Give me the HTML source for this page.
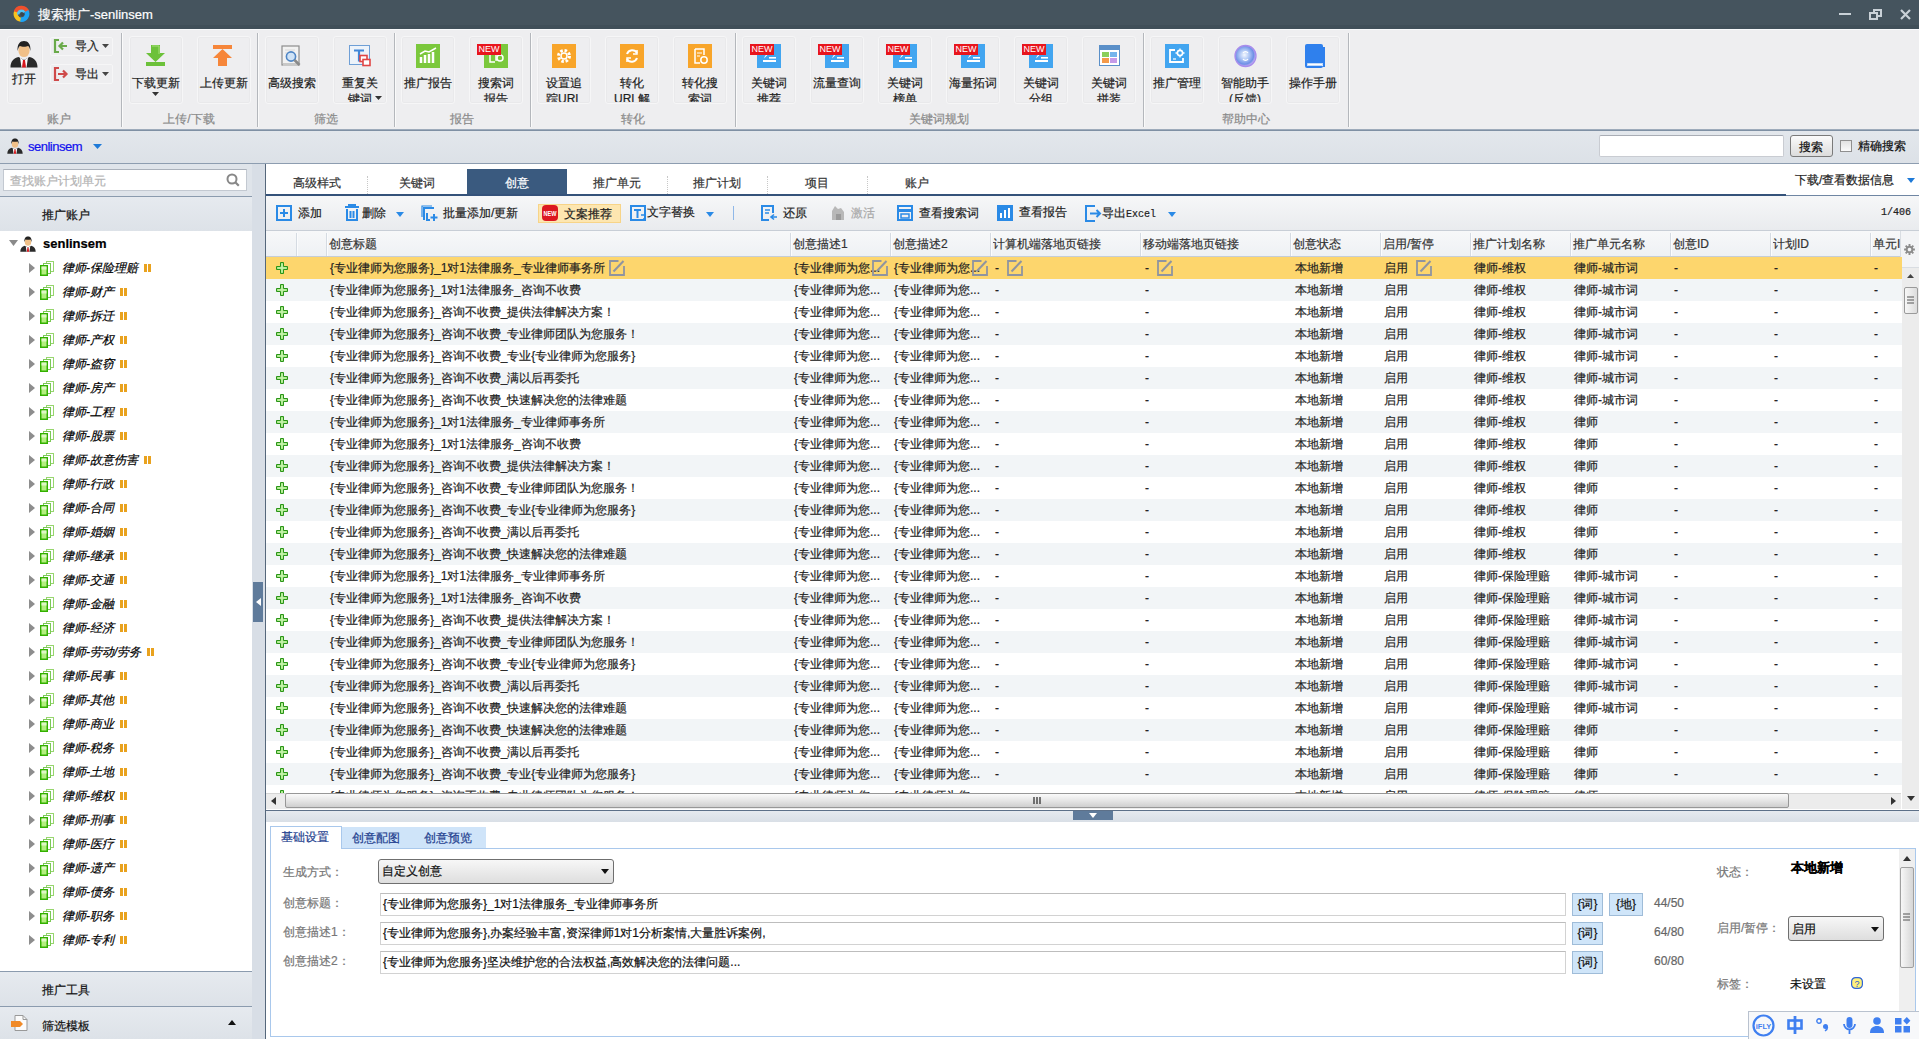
<!DOCTYPE html><html><head><meta charset="utf-8"><style>
*{box-sizing:border-box}
html,body{margin:0;padding:0}
body{width:1919px;height:1039px;overflow:hidden;position:relative;font-family:"Liberation Sans",sans-serif;font-size:12px;color:#1e1e1e;background:#dfe4ea}
div{position:absolute}
.t{white-space:nowrap;line-height:16px;height:16px;-webkit-text-stroke-width:0.2px}
svg{position:absolute;overflow:visible}
</style></head><body>
<div style="left:0px;top:0px;width:1919px;height:29px;background:#45545e"></div>
<div style="left:0px;top:25px;width:1919px;height:4px;background:#404f59"></div>
<div style="left:0px;top:29px;width:1919px;height:1px;background:#f7f9fb"></div>
<svg style="left:12px;top:5px" width="20" height="20" viewBox="0 0 20 20"><path d="M8.99 14.78A5.8 5.8 0 0 1 4.75 5.67" fill="none" stroke="#f7c21f" stroke-width="4.2"/><path d="M3.67 6.88A6.2 6.2 0 0 1 15.49 7.40" fill="none" stroke="#f0502c" stroke-width="4"/><path d="M14.35 6.20A5.6 5.6 0 0 1 8.53 14.51" fill="none" stroke="#1ea4f5" stroke-width="4.6"/><path d="M6.35 9.56A3.2 3.2 0 0 1 12.27 7.40" fill="none" stroke="#55c4f2" stroke-width="2.6"/><circle cx="10.3" cy="9.3" r="1.9" fill="#3a4650"/></svg>
<div class="t" style="left:38px;top:7px;color:#fff;font-size:13px"><span style="font-size:12.5px">搜索推广</span>-senlinsem</div>
<div style="left:1839px;top:13px;width:12px;height:2px;background:#c9d1d7"></div>
<svg style="left:1869px;top:9px" width="13" height="11"><path d="M5 3V1h7v6h-3" fill="none" stroke="#c9d1d7" stroke-width="2"/><rect x="1" y="4" width="7" height="6" fill="none" stroke="#c9d1d7" stroke-width="2"/></svg>
<svg style="left:1900px;top:9px" width="11" height="11"><path d="M1 1L10 10M10 1L1 10" stroke="#c9d1d7" stroke-width="2.2"/></svg><div style="left:0px;top:30px;width:1919px;height:99px;background:#eeeef0"></div>
<div style="left:0px;top:129px;width:1919px;height:1px;background:#9eabbb"></div>
<div style="left:0px;top:130px;width:1919px;height:1px;background:#7f90a4"></div>
<div style="left:121px;top:33px;width:1px;height:94px;background:#b4b7bc"></div>
<div style="left:122px;top:33px;width:1px;height:94px;background:#fafafa"></div>
<div style="left:257px;top:33px;width:1px;height:94px;background:#b4b7bc"></div>
<div style="left:258px;top:33px;width:1px;height:94px;background:#fafafa"></div>
<div style="left:394px;top:33px;width:1px;height:94px;background:#b4b7bc"></div>
<div style="left:395px;top:33px;width:1px;height:94px;background:#fafafa"></div>
<div style="left:530px;top:33px;width:1px;height:94px;background:#b4b7bc"></div>
<div style="left:531px;top:33px;width:1px;height:94px;background:#fafafa"></div>
<div style="left:735px;top:33px;width:1px;height:94px;background:#b4b7bc"></div>
<div style="left:736px;top:33px;width:1px;height:94px;background:#fafafa"></div>
<div style="left:1143px;top:33px;width:1px;height:94px;background:#b4b7bc"></div>
<div style="left:1144px;top:33px;width:1px;height:94px;background:#fafafa"></div>
<div style="left:1348px;top:33px;width:1px;height:94px;background:#b4b7bc"></div>
<div style="left:1349px;top:33px;width:1px;height:94px;background:#fafafa"></div>
<div class="t" style="left:0px;top:111px;width:118px;text-align:center;color:#8a8a8a">账户</div>
<div class="t" style="left:121px;top:111px;width:136px;text-align:center;color:#8a8a8a">上传/下载</div>
<div class="t" style="left:257px;top:111px;width:137px;text-align:center;color:#8a8a8a">筛选</div>
<div class="t" style="left:394px;top:111px;width:136px;text-align:center;color:#8a8a8a">报告</div>
<div class="t" style="left:530px;top:111px;width:205px;text-align:center;color:#8a8a8a">转化</div>
<div class="t" style="left:735px;top:111px;width:408px;text-align:center;color:#8a8a8a">关键词规划</div>
<div class="t" style="left:1143px;top:111px;width:205px;text-align:center;color:#8a8a8a">帮助中心</div>
<div style="left:7px;top:36px;width:36px;height:68px;border:1px solid #f6f6f7;border-radius:3px;box-shadow:inset 0 0 0 1px #e9e9eb"></div>
<svg style="left:10px;top:40px" width="28" height="28" viewBox="0 0 28 28">
<path d="M0.5 27.5c0-6 3-9.5 8-10.5l5.5 3 5.5-3c5 1 8 4.5 8 10.5z" fill="#2a2a2a"/>
<path d="M10 17.5l4 3 4-3-1.5 10h-5z" fill="#fff"/>
<path d="M13 20h2l1 7.5h-4z" fill="#d8161c"/>
<ellipse cx="14" cy="10.5" rx="5.6" ry="6.6" fill="#f0c088"/>
<path d="M7.6 11C7 4 10 1 14 1s7 3 6.4 10c-.6-3-1.5-4.5-2.4-5-1.5 1-6.5 1-8 0-.9.5-1.8 2-2.4 5z" fill="#222"/>
</svg>
<div class="t" style="left:12px;top:71px;">打开</div>
<div style="left:50px;top:37px;width:63px;height:19px;border:1px solid #f6f6f7;border-radius:2px"></div>
<div style="left:50px;top:64px;width:63px;height:20px;border:1px solid #f6f6f7;border-radius:2px"></div>
<svg style="left:54px;top:39px" width="14" height="14"><path d="M5 1H1v12h4" fill="none" stroke="#6aaa4a" stroke-width="2.2"/><path d="M13 7H6M9 3.5L5.5 7 9 10.5" fill="none" stroke="#6aaa4a" stroke-width="2.2"/></svg>
<div class="t" style="left:75px;top:38px;">导入</div>
<svg style="left:102px;top:44px" width="7" height="4"><path d="M0 0h7L3.5 4z" fill="#444"/></svg>
<svg style="left:54px;top:67px" width="14" height="14"><path d="M5 1H1v12h4" fill="none" stroke="#cf4a4a" stroke-width="2.2"/><path d="M4 7h8M9 3.5L12.5 7 9 10.5" fill="none" stroke="#cf4a4a" stroke-width="2.2"/></svg>
<div class="t" style="left:75px;top:66px;">导出</div>
<svg style="left:102px;top:72px" width="7" height="4"><path d="M0 0h7L3.5 4z" fill="#444"/></svg>
<div style="left:129px;top:36px;width:54px;height:68px;border:1px solid #f6f6f7;border-radius:3px;background:#eeeef0;box-shadow:inset 0 0 0 1px #e9e9eb"></div>
<svg style="left:146px;top:45px" width="19" height="21"><path d="M5 0h9v8h5l-9.5 9L0 8h5z" fill="#6cc13a"/><rect x="0" y="17" width="19" height="4" fill="#6cc13a"/><path d="M6 1h7v8" fill="none" stroke="#a6e07a"/></svg>
<div class="t" style="left:129px;top:75px;width:54px;text-align:center">下载更新</div>
<svg style="left:152px;top:92px" width="7" height="4"><path d="M0 0h7L3.5 4z" fill="#333"/></svg>
<div style="left:197px;top:36px;width:54px;height:68px;border:1px solid #f6f6f7;border-radius:3px;background:#eeeef0;box-shadow:inset 0 0 0 1px #e9e9eb"></div>
<svg style="left:213px;top:45px" width="19" height="21"><rect x="0" y="0" width="19" height="4" fill="#f6863a"/><path d="M9.5 4L19 13h-5v8H5v-8H0z" fill="#f6863a"/></svg>
<div class="t" style="left:197px;top:75px;width:54px;text-align:center">上传更新</div>
<div style="left:265px;top:36px;width:54px;height:68px;border:1px solid #f6f6f7;border-radius:3px;background:#eeeef0;box-shadow:inset 0 0 0 1px #e9e9eb"></div>
<svg style="left:281px;top:45px" width="23" height="22"><rect x="1" y="1" width="17" height="19" fill="#f2f2f2" stroke="#8d8d8d" stroke-width="1.2"/><rect x="2" y="18" width="17" height="3" fill="#c8c8c8"/><path d="M4 5h10M4 8h8" stroke="#d8d8d8"/><circle cx="10" cy="11.5" r="4.6" fill="#cfe3f7" stroke="#4f86c6" stroke-width="1.6"/><path d="M13.5 15l5 5" stroke="#8a8a8a" stroke-width="2.6"/></svg>
<div class="t" style="left:265px;top:75px;width:54px;text-align:center">高级搜索</div>
<div style="left:333px;top:36px;width:54px;height:68px;border:1px solid #f6f6f7;border-radius:3px;background:#eeeef0;box-shadow:inset 0 0 0 1px #e9e9eb"></div>

<div class="t" style="left:333px;top:75px;width:54px;text-align:center">重复关</div>
<div style="left:333px;top:91px;width:54px;height:11px;overflow:hidden"><div class="t" style="left:0;top:0;width:54px;text-align:center">键词</div></div><svg style="left:349px;top:45px" width="24" height="24"><rect x="0.5" y="0.5" width="20" height="19" fill="#edf3fa" stroke="#6f9fd6"/><path d="M5 5.5h10M10 5.5v11" stroke="#3f86d8" stroke-width="2.2"/><rect x="11" y="10.5" width="7" height="6" fill="#fff" stroke="#e04545" stroke-width="1.6"/><rect x="14" y="14.5" width="7" height="6" fill="#fff" stroke="#e04545" stroke-width="1.6"/></svg>
<svg style="left:375px;top:96px" width="7" height="4"><path d="M0 0h7L3.5 4z" fill="#333"/></svg>
<div style="left:401px;top:36px;width:54px;height:68px;border:1px solid #f6f6f7;border-radius:3px;background:#eeeef0;box-shadow:inset 0 0 0 1px #e9e9eb"></div>
<svg style="left:416px;top:44px" width="24" height="24"><rect width="24" height="24" fill="#7bc83c"/><path d="M5 19V13M9 19V11M13 19V10M17 19V8" stroke="#fff" stroke-width="2.5"/><path d="M4 10l5-3 4 1 7-4" fill="none" stroke="#fff" stroke-width="1.5"/></svg>
<div class="t" style="left:401px;top:75px;width:54px;text-align:center">推广报告</div>
<div style="left:469px;top:36px;width:54px;height:68px;border:1px solid #f6f6f7;border-radius:3px;background:#eeeef0;box-shadow:inset 0 0 0 1px #e9e9eb"></div>
<svg style="left:484px;top:44px" width="24" height="24"><rect width="24" height="24" fill="#7bc83c"/><path d="M6 9v9h5M13 10h-1v6h1" fill="none" stroke="#fff" stroke-width="1.5"/><circle cx="16" cy="14" r="3" fill="none" stroke="#fff" stroke-width="1.5"/></svg>
<div style="left:477px;top:44px;width:24px;height:11px;background:#e8151d;color:#fff;font-size:9px;line-height:11px;text-align:center;letter-spacing:0px">NEW</div>
<div class="t" style="left:469px;top:75px;width:54px;text-align:center">搜索词</div>
<div style="left:469px;top:91px;width:54px;height:11px;overflow:hidden"><div class="t" style="left:0;top:0;width:54px;text-align:center">报告</div></div>
<div style="left:537px;top:36px;width:54px;height:68px;border:1px solid #f6f6f7;border-radius:3px;background:#eeeef0;box-shadow:inset 0 0 0 1px #e9e9eb"></div>
<svg style="left:552px;top:44px" width="24" height="24"><rect width="24" height="24" fill="#f8a52a"/><circle cx="12" cy="12" r="5.5" fill="none" stroke="#fff" stroke-width="3" stroke-dasharray="2.5 1.8"/><circle cx="12" cy="12" r="3" fill="none" stroke="#fff" stroke-width="1.5"/></svg>
<div class="t" style="left:537px;top:75px;width:54px;text-align:center">设置追</div>
<div style="left:537px;top:91px;width:54px;height:11px;overflow:hidden"><div class="t" style="left:0;top:0;width:54px;text-align:center">踪URL</div></div>
<div style="left:605px;top:36px;width:54px;height:68px;border:1px solid #f6f6f7;border-radius:3px;background:#eeeef0;box-shadow:inset 0 0 0 1px #e9e9eb"></div>
<svg style="left:620px;top:44px" width="24" height="24"><rect width="24" height="24" fill="#f8a52a"/><path d="M7 10a5.5 5.5 0 0 1 10-1M17 14a5.5 5.5 0 0 1-10 1" fill="none" stroke="#fff" stroke-width="2"/><path d="M17 6v4h-4M7 18v-4h4" fill="none" stroke="#fff" stroke-width="1.5"/></svg>
<div class="t" style="left:605px;top:75px;width:54px;text-align:center">转化</div>
<div style="left:605px;top:91px;width:54px;height:11px;overflow:hidden"><div class="t" style="left:0;top:0;width:54px;text-align:center">URL解</div></div>
<div style="left:673px;top:36px;width:54px;height:68px;border:1px solid #f6f6f7;border-radius:3px;background:#eeeef0;box-shadow:inset 0 0 0 1px #e9e9eb"></div>
<svg style="left:688px;top:44px" width="24" height="24"><rect width="24" height="24" fill="#f8a52a"/><path d="M7 5h9v6M7 5v14h5" fill="none" stroke="#fff" stroke-width="1.5"/><path d="M9 9h5M9 12h3" stroke="#fff" stroke-width="1.2"/><circle cx="16" cy="16" r="3.2" fill="none" stroke="#fff" stroke-width="1.5"/></svg>
<div class="t" style="left:673px;top:75px;width:54px;text-align:center">转化搜</div>
<div style="left:673px;top:91px;width:54px;height:11px;overflow:hidden"><div class="t" style="left:0;top:0;width:54px;text-align:center">索词</div></div>
<div style="left:742px;top:36px;width:54px;height:68px;border:1px solid #f6f6f7;border-radius:3px;background:#eeeef0;box-shadow:inset 0 0 0 1px #e9e9eb"></div>
<svg style="left:757px;top:44px" width="24" height="24"><rect width="24" height="24" fill="#42a5f0"/><path d="M6 16h13v2H6z" fill="#fff"/><path d="M12 13h7v1.6h-7z" fill="#fff"/><path d="M7 14.5c1-3 3-6 7-8-1.5 2-3 4-4.5 5.5z" fill="#fff"/></svg>
<div style="left:750px;top:44px;width:24px;height:11px;background:#e8151d;color:#fff;font-size:9px;line-height:11px;text-align:center;letter-spacing:0px">NEW</div>
<div class="t" style="left:742px;top:75px;width:54px;text-align:center">关键词</div>
<div style="left:742px;top:91px;width:54px;height:11px;overflow:hidden"><div class="t" style="left:0;top:0;width:54px;text-align:center">推荐</div></div>
<div style="left:810px;top:36px;width:54px;height:68px;border:1px solid #f6f6f7;border-radius:3px;background:#eeeef0;box-shadow:inset 0 0 0 1px #e9e9eb"></div>
<svg style="left:825px;top:44px" width="24" height="24"><rect width="24" height="24" fill="#42a5f0"/><path d="M6 16h13v2H6z" fill="#fff"/><path d="M12 13h7v1.6h-7z" fill="#fff"/><path d="M7 14.5c1-3 3-6 7-8-1.5 2-3 4-4.5 5.5z" fill="#fff"/></svg>
<div style="left:818px;top:44px;width:24px;height:11px;background:#e8151d;color:#fff;font-size:9px;line-height:11px;text-align:center;letter-spacing:0px">NEW</div>
<div class="t" style="left:810px;top:75px;width:54px;text-align:center">流量查询</div>
<div style="left:878px;top:36px;width:54px;height:68px;border:1px solid #f6f6f7;border-radius:3px;background:#eeeef0;box-shadow:inset 0 0 0 1px #e9e9eb"></div>
<svg style="left:893px;top:44px" width="24" height="24"><rect width="24" height="24" fill="#42a5f0"/><path d="M6 16h13v2H6z" fill="#fff"/><path d="M12 13h7v1.6h-7z" fill="#fff"/><path d="M7 14.5c1-3 3-6 7-8-1.5 2-3 4-4.5 5.5z" fill="#fff"/></svg>
<div style="left:886px;top:44px;width:24px;height:11px;background:#e8151d;color:#fff;font-size:9px;line-height:11px;text-align:center;letter-spacing:0px">NEW</div>
<div class="t" style="left:878px;top:75px;width:54px;text-align:center">关键词</div>
<div style="left:878px;top:91px;width:54px;height:11px;overflow:hidden"><div class="t" style="left:0;top:0;width:54px;text-align:center">榜单</div></div>
<div style="left:946px;top:36px;width:54px;height:68px;border:1px solid #f6f6f7;border-radius:3px;background:#eeeef0;box-shadow:inset 0 0 0 1px #e9e9eb"></div>
<svg style="left:961px;top:44px" width="24" height="24"><rect width="24" height="24" fill="#42a5f0"/><path d="M6 16h13v2H6z" fill="#fff"/><path d="M12 13h7v1.6h-7z" fill="#fff"/><path d="M7 14.5c1-3 3-6 7-8-1.5 2-3 4-4.5 5.5z" fill="#fff"/></svg>
<div style="left:954px;top:44px;width:24px;height:11px;background:#e8151d;color:#fff;font-size:9px;line-height:11px;text-align:center;letter-spacing:0px">NEW</div>
<div class="t" style="left:946px;top:75px;width:54px;text-align:center">海量拓词</div>
<div style="left:1014px;top:36px;width:54px;height:68px;border:1px solid #f6f6f7;border-radius:3px;background:#eeeef0;box-shadow:inset 0 0 0 1px #e9e9eb"></div>
<svg style="left:1029px;top:44px" width="24" height="24"><rect width="24" height="24" fill="#42a5f0"/><path d="M6 16h13v2H6z" fill="#fff"/><path d="M12 13h7v1.6h-7z" fill="#fff"/><path d="M7 14.5c1-3 3-6 7-8-1.5 2-3 4-4.5 5.5z" fill="#fff"/></svg>
<div style="left:1022px;top:44px;width:24px;height:11px;background:#e8151d;color:#fff;font-size:9px;line-height:11px;text-align:center;letter-spacing:0px">NEW</div>
<div class="t" style="left:1014px;top:75px;width:54px;text-align:center">关键词</div>
<div style="left:1014px;top:91px;width:54px;height:11px;overflow:hidden"><div class="t" style="left:0;top:0;width:54px;text-align:center">分组</div></div>
<div style="left:1082px;top:36px;width:54px;height:68px;border:1px solid #f6f6f7;border-radius:3px;background:#eeeef0;box-shadow:inset 0 0 0 1px #e9e9eb"></div>
<svg style="left:1099px;top:45px" width="21" height="21"><rect x="0.5" y="0.5" width="20" height="20" fill="#fff" stroke="#5a8fc8"/><rect x="1" y="1" width="19" height="4" fill="#5a8fc8"/><rect x="3" y="7" width="7" height="5" fill="#8ccf5a"/><rect x="11" y="7" width="7" height="5" fill="#74b4ec"/><rect x="3" y="13" width="7" height="5" fill="#f49a4a"/><rect x="11" y="13" width="7" height="5" fill="#c59ae8"/></svg>
<div class="t" style="left:1082px;top:75px;width:54px;text-align:center">关键词</div>
<div style="left:1082px;top:91px;width:54px;height:11px;overflow:hidden"><div class="t" style="left:0;top:0;width:54px;text-align:center">拼装</div></div>
<div style="left:1150px;top:36px;width:54px;height:68px;border:1px solid #f6f6f7;border-radius:3px;background:#eeeef0;box-shadow:inset 0 0 0 1px #e9e9eb"></div>
<svg style="left:1165px;top:44px" width="24" height="24"><rect width="24" height="24" fill="#42a5f0"/><path d="M10 6H5v12h13v-4" fill="none" stroke="#fff" stroke-width="1.8"/><circle cx="15" cy="9" r="2.6" fill="none" stroke="#fff" stroke-width="1.6"/><path d="M15 4.5v1.6M15 11.9v1.6M10.5 9h1.6M17.9 9h1.6" stroke="#fff" stroke-width="1.3"/><path d="M8 15h3" stroke="#fff" stroke-width="1.2"/></svg>
<div class="t" style="left:1150px;top:75px;width:54px;text-align:center">推广管理</div>
<div style="left:1218px;top:36px;width:54px;height:68px;border:1px solid #f6f6f7;border-radius:3px;background:#eeeef0;box-shadow:inset 0 0 0 1px #e9e9eb"></div>
<svg style="left:1234px;top:44px" width="23" height="24"><defs><radialGradient id="og" cx="45%" cy="45%" r="55%"><stop offset="0" stop-color="#f4f8ff"/><stop offset="0.45" stop-color="#a9c3f4"/><stop offset="0.8" stop-color="#6f8fe6"/><stop offset="1" stop-color="#c9b4f4"/></radialGradient></defs><circle cx="11.5" cy="12" r="10.5" fill="url(#og)" stroke="#a88cec" stroke-width="1.3"/><path d="M9 9a3 3 0 0 1 5 0M9 15a3 3 0 0 0 5 0" fill="none" stroke="#fff" stroke-width="1.2"/></svg>
<div class="t" style="left:1218px;top:75px;width:54px;text-align:center">智能助手</div>
<div style="left:1218px;top:91px;width:54px;height:11px;overflow:hidden"><div class="t" style="left:0;top:0;width:54px;text-align:center">(反馈)</div></div>
<div style="left:1286px;top:36px;width:54px;height:68px;border:1px solid #f6f6f7;border-radius:3px;background:#eeeef0;box-shadow:inset 0 0 0 1px #e9e9eb"></div>
<svg style="left:1304px;top:44px" width="22" height="25"><rect x="1" y="0" width="18" height="24" rx="2" fill="#2f80ed"/><rect x="19" y="3" width="2" height="20" fill="#2f80ed"/><rect x="3" y="19" width="16" height="3" fill="#fff"/><rect x="3.5" y="19.5" width="15" height="2" fill="none" stroke="#9cc3f7" stroke-width="0.6"/></svg>
<div class="t" style="left:1286px;top:75px;width:54px;text-align:center">操作手册</div><div style="left:0px;top:131px;width:1919px;height:32px;background:linear-gradient(#e3e7ec,#dce1e7)"></div>
<div style="left:0px;top:163px;width:1919px;height:1px;background:#8d9db0"></div>
<svg style="left:7px;top:138px" width="16" height="16" viewBox="0 0 28 28">
<path d="M0.5 27.5c0-6 3-9.5 8-10.5l5.5 3 5.5-3c5 1 8 4.5 8 10.5z" fill="#2a2a2a"/>
<path d="M10 17.5l4 3 4-3-1.5 10h-5z" fill="#fff"/>
<path d="M13 20h2l1 7.5h-4z" fill="#d8161c"/>
<ellipse cx="14" cy="10.5" rx="5.6" ry="6.6" fill="#f0c088"/>
<path d="M7.6 11C7 4 10 1 14 1s7 3 6.4 10c-.6-3-1.5-4.5-2.4-5-1.5 1-6.5 1-8 0-.9.5-1.8 2-2.4 5z" fill="#222"/>
</svg>
<div class="t" style="left:28px;top:139px;color:#1010ee;font-size:13px;letter-spacing:-0.5px">senlinsem</div>
<svg style="left:93px;top:144px" width="9" height="5"><path d="M0 0h9L4.5 5z" fill="#1e7ad8"/></svg>
<div style="left:1599px;top:135px;width:185px;height:22px;background:#fff;border:1px solid #c9ccd2;border-top-color:#a9adb5;border-radius:2px"></div>
<div style="left:1790px;top:135px;width:43px;height:22px;background:linear-gradient(#fbfbfb,#dcdcdc);border:1px solid #7a7a7a;border-radius:3px"></div>
<div class="t" style="left:1799px;top:139px;color:#111">搜索</div>
<div style="left:1840px;top:140px;width:12px;height:12px;background:linear-gradient(#e2e2e2,#fbfbfb);border:1px solid #8f8f8f"></div>
<div class="t" style="left:1858px;top:138px;color:#111">精确搜索</div><div style="left:0px;top:164px;width:252px;height:32px;background:#dfe4ea"></div>
<div style="left:3px;top:169px;width:244px;height:22px;background:#fff;border:1px solid #c3c9d1;border-top-color:#aab1bb"></div>
<div class="t" style="left:10px;top:173px;color:#b3b3b3">查找账户计划单元</div>
<svg style="left:226px;top:173px" width="14" height="14"><circle cx="6" cy="6" r="4.5" fill="none" stroke="#888" stroke-width="2"/><path d="M9.3 9.3l3.5 3.5" stroke="#888" stroke-width="2.2"/></svg>
<div style="left:0px;top:196px;width:252px;height:1px;background:#8b9bae"></div>
<div style="left:0px;top:197px;width:252px;height:34px;background:linear-gradient(#e6eaef,#dde2e8)"></div>
<div class="t" style="left:42px;top:207px;color:#111">推广账户</div>
<div style="left:0px;top:231px;width:252px;height:740px;background:#fff"></div>
<svg style="left:9px;top:240px" width="9" height="6"><path d="M0 0h9L4.5 6z" fill="#8a8a8a"/></svg>
<svg style="left:20px;top:236px" width="16" height="16" viewBox="0 0 28 28">
<path d="M0.5 27.5c0-6 3-9.5 8-10.5l5.5 3 5.5-3c5 1 8 4.5 8 10.5z" fill="#2a2a2a"/>
<path d="M10 17.5l4 3 4-3-1.5 10h-5z" fill="#fff"/>
<path d="M13 20h2l1 7.5h-4z" fill="#d8161c"/>
<ellipse cx="14" cy="10.5" rx="5.6" ry="6.6" fill="#f0c088"/>
<path d="M7.6 11C7 4 10 1 14 1s7 3 6.4 10c-.6-3-1.5-4.5-2.4-5-1.5 1-6.5 1-8 0-.9.5-1.8 2-2.4 5z" fill="#222"/>
</svg>
<div class="t" style="left:43px;top:236px;font-weight:bold;font-size:13px;color:#000">senlinsem</div>
<svg style="left:29px;top:263px" width="6" height="10"><path d="M0 0l6 5-6 5z" fill="#8d8d8d"/></svg>
<svg style="left:40px;top:260px" width="15" height="17"><rect x="6.5" y="1.5" width="7" height="10" fill="#fff" stroke="#97d66e"/><rect x="3.5" y="3.5" width="7" height="10" fill="#fff" stroke="#7cc956"/><rect x="0.75" y="5.75" width="6.5" height="9.5" fill="#b4ee80" stroke="#33b000" stroke-width="1.5"/><rect x="1.5" y="6.5" width="5" height="3" fill="#dff7c6"/></svg>
<div class="t" id="tr0" style="left:62px;top:260px;font-style:italic;color:#000">律师-保险理赔<span style="display:inline-block;width:3px;height:8px;background:#e9a21e;margin-left:6px;vertical-align:0px"></span><span style="display:inline-block;width:3px;height:8px;background:#e9a21e;margin-left:1px;vertical-align:0px"></span></div>
<svg style="left:29px;top:287px" width="6" height="10"><path d="M0 0l6 5-6 5z" fill="#8d8d8d"/></svg>
<svg style="left:40px;top:284px" width="15" height="17"><rect x="6.5" y="1.5" width="7" height="10" fill="#fff" stroke="#97d66e"/><rect x="3.5" y="3.5" width="7" height="10" fill="#fff" stroke="#7cc956"/><rect x="0.75" y="5.75" width="6.5" height="9.5" fill="#b4ee80" stroke="#33b000" stroke-width="1.5"/><rect x="1.5" y="6.5" width="5" height="3" fill="#dff7c6"/></svg>
<div class="t" id="tr1" style="left:62px;top:284px;font-style:italic;color:#000">律师-财产<span style="display:inline-block;width:3px;height:8px;background:#e9a21e;margin-left:6px;vertical-align:0px"></span><span style="display:inline-block;width:3px;height:8px;background:#e9a21e;margin-left:1px;vertical-align:0px"></span></div>
<svg style="left:29px;top:311px" width="6" height="10"><path d="M0 0l6 5-6 5z" fill="#8d8d8d"/></svg>
<svg style="left:40px;top:308px" width="15" height="17"><rect x="6.5" y="1.5" width="7" height="10" fill="#fff" stroke="#97d66e"/><rect x="3.5" y="3.5" width="7" height="10" fill="#fff" stroke="#7cc956"/><rect x="0.75" y="5.75" width="6.5" height="9.5" fill="#b4ee80" stroke="#33b000" stroke-width="1.5"/><rect x="1.5" y="6.5" width="5" height="3" fill="#dff7c6"/></svg>
<div class="t" id="tr2" style="left:62px;top:308px;font-style:italic;color:#000">律师-拆迁<span style="display:inline-block;width:3px;height:8px;background:#e9a21e;margin-left:6px;vertical-align:0px"></span><span style="display:inline-block;width:3px;height:8px;background:#e9a21e;margin-left:1px;vertical-align:0px"></span></div>
<svg style="left:29px;top:335px" width="6" height="10"><path d="M0 0l6 5-6 5z" fill="#8d8d8d"/></svg>
<svg style="left:40px;top:332px" width="15" height="17"><rect x="6.5" y="1.5" width="7" height="10" fill="#fff" stroke="#97d66e"/><rect x="3.5" y="3.5" width="7" height="10" fill="#fff" stroke="#7cc956"/><rect x="0.75" y="5.75" width="6.5" height="9.5" fill="#b4ee80" stroke="#33b000" stroke-width="1.5"/><rect x="1.5" y="6.5" width="5" height="3" fill="#dff7c6"/></svg>
<div class="t" id="tr3" style="left:62px;top:332px;font-style:italic;color:#000">律师-产权<span style="display:inline-block;width:3px;height:8px;background:#e9a21e;margin-left:6px;vertical-align:0px"></span><span style="display:inline-block;width:3px;height:8px;background:#e9a21e;margin-left:1px;vertical-align:0px"></span></div>
<svg style="left:29px;top:359px" width="6" height="10"><path d="M0 0l6 5-6 5z" fill="#8d8d8d"/></svg>
<svg style="left:40px;top:356px" width="15" height="17"><rect x="6.5" y="1.5" width="7" height="10" fill="#fff" stroke="#97d66e"/><rect x="3.5" y="3.5" width="7" height="10" fill="#fff" stroke="#7cc956"/><rect x="0.75" y="5.75" width="6.5" height="9.5" fill="#b4ee80" stroke="#33b000" stroke-width="1.5"/><rect x="1.5" y="6.5" width="5" height="3" fill="#dff7c6"/></svg>
<div class="t" id="tr4" style="left:62px;top:356px;font-style:italic;color:#000">律师-盗窃<span style="display:inline-block;width:3px;height:8px;background:#e9a21e;margin-left:6px;vertical-align:0px"></span><span style="display:inline-block;width:3px;height:8px;background:#e9a21e;margin-left:1px;vertical-align:0px"></span></div>
<svg style="left:29px;top:383px" width="6" height="10"><path d="M0 0l6 5-6 5z" fill="#8d8d8d"/></svg>
<svg style="left:40px;top:380px" width="15" height="17"><rect x="6.5" y="1.5" width="7" height="10" fill="#fff" stroke="#97d66e"/><rect x="3.5" y="3.5" width="7" height="10" fill="#fff" stroke="#7cc956"/><rect x="0.75" y="5.75" width="6.5" height="9.5" fill="#b4ee80" stroke="#33b000" stroke-width="1.5"/><rect x="1.5" y="6.5" width="5" height="3" fill="#dff7c6"/></svg>
<div class="t" id="tr5" style="left:62px;top:380px;font-style:italic;color:#000">律师-房产<span style="display:inline-block;width:3px;height:8px;background:#e9a21e;margin-left:6px;vertical-align:0px"></span><span style="display:inline-block;width:3px;height:8px;background:#e9a21e;margin-left:1px;vertical-align:0px"></span></div>
<svg style="left:29px;top:407px" width="6" height="10"><path d="M0 0l6 5-6 5z" fill="#8d8d8d"/></svg>
<svg style="left:40px;top:404px" width="15" height="17"><rect x="6.5" y="1.5" width="7" height="10" fill="#fff" stroke="#97d66e"/><rect x="3.5" y="3.5" width="7" height="10" fill="#fff" stroke="#7cc956"/><rect x="0.75" y="5.75" width="6.5" height="9.5" fill="#b4ee80" stroke="#33b000" stroke-width="1.5"/><rect x="1.5" y="6.5" width="5" height="3" fill="#dff7c6"/></svg>
<div class="t" id="tr6" style="left:62px;top:404px;font-style:italic;color:#000">律师-工程<span style="display:inline-block;width:3px;height:8px;background:#e9a21e;margin-left:6px;vertical-align:0px"></span><span style="display:inline-block;width:3px;height:8px;background:#e9a21e;margin-left:1px;vertical-align:0px"></span></div>
<svg style="left:29px;top:431px" width="6" height="10"><path d="M0 0l6 5-6 5z" fill="#8d8d8d"/></svg>
<svg style="left:40px;top:428px" width="15" height="17"><rect x="6.5" y="1.5" width="7" height="10" fill="#fff" stroke="#97d66e"/><rect x="3.5" y="3.5" width="7" height="10" fill="#fff" stroke="#7cc956"/><rect x="0.75" y="5.75" width="6.5" height="9.5" fill="#b4ee80" stroke="#33b000" stroke-width="1.5"/><rect x="1.5" y="6.5" width="5" height="3" fill="#dff7c6"/></svg>
<div class="t" id="tr7" style="left:62px;top:428px;font-style:italic;color:#000">律师-股票<span style="display:inline-block;width:3px;height:8px;background:#e9a21e;margin-left:6px;vertical-align:0px"></span><span style="display:inline-block;width:3px;height:8px;background:#e9a21e;margin-left:1px;vertical-align:0px"></span></div>
<svg style="left:29px;top:455px" width="6" height="10"><path d="M0 0l6 5-6 5z" fill="#8d8d8d"/></svg>
<svg style="left:40px;top:452px" width="15" height="17"><rect x="6.5" y="1.5" width="7" height="10" fill="#fff" stroke="#97d66e"/><rect x="3.5" y="3.5" width="7" height="10" fill="#fff" stroke="#7cc956"/><rect x="0.75" y="5.75" width="6.5" height="9.5" fill="#b4ee80" stroke="#33b000" stroke-width="1.5"/><rect x="1.5" y="6.5" width="5" height="3" fill="#dff7c6"/></svg>
<div class="t" id="tr8" style="left:62px;top:452px;font-style:italic;color:#000">律师-故意伤害<span style="display:inline-block;width:3px;height:8px;background:#e9a21e;margin-left:6px;vertical-align:0px"></span><span style="display:inline-block;width:3px;height:8px;background:#e9a21e;margin-left:1px;vertical-align:0px"></span></div>
<svg style="left:29px;top:479px" width="6" height="10"><path d="M0 0l6 5-6 5z" fill="#8d8d8d"/></svg>
<svg style="left:40px;top:476px" width="15" height="17"><rect x="6.5" y="1.5" width="7" height="10" fill="#fff" stroke="#97d66e"/><rect x="3.5" y="3.5" width="7" height="10" fill="#fff" stroke="#7cc956"/><rect x="0.75" y="5.75" width="6.5" height="9.5" fill="#b4ee80" stroke="#33b000" stroke-width="1.5"/><rect x="1.5" y="6.5" width="5" height="3" fill="#dff7c6"/></svg>
<div class="t" id="tr9" style="left:62px;top:476px;font-style:italic;color:#000">律师-行政<span style="display:inline-block;width:3px;height:8px;background:#e9a21e;margin-left:6px;vertical-align:0px"></span><span style="display:inline-block;width:3px;height:8px;background:#e9a21e;margin-left:1px;vertical-align:0px"></span></div>
<svg style="left:29px;top:503px" width="6" height="10"><path d="M0 0l6 5-6 5z" fill="#8d8d8d"/></svg>
<svg style="left:40px;top:500px" width="15" height="17"><rect x="6.5" y="1.5" width="7" height="10" fill="#fff" stroke="#97d66e"/><rect x="3.5" y="3.5" width="7" height="10" fill="#fff" stroke="#7cc956"/><rect x="0.75" y="5.75" width="6.5" height="9.5" fill="#b4ee80" stroke="#33b000" stroke-width="1.5"/><rect x="1.5" y="6.5" width="5" height="3" fill="#dff7c6"/></svg>
<div class="t" id="tr10" style="left:62px;top:500px;font-style:italic;color:#000">律师-合同<span style="display:inline-block;width:3px;height:8px;background:#e9a21e;margin-left:6px;vertical-align:0px"></span><span style="display:inline-block;width:3px;height:8px;background:#e9a21e;margin-left:1px;vertical-align:0px"></span></div>
<svg style="left:29px;top:527px" width="6" height="10"><path d="M0 0l6 5-6 5z" fill="#8d8d8d"/></svg>
<svg style="left:40px;top:524px" width="15" height="17"><rect x="6.5" y="1.5" width="7" height="10" fill="#fff" stroke="#97d66e"/><rect x="3.5" y="3.5" width="7" height="10" fill="#fff" stroke="#7cc956"/><rect x="0.75" y="5.75" width="6.5" height="9.5" fill="#b4ee80" stroke="#33b000" stroke-width="1.5"/><rect x="1.5" y="6.5" width="5" height="3" fill="#dff7c6"/></svg>
<div class="t" id="tr11" style="left:62px;top:524px;font-style:italic;color:#000">律师-婚姻<span style="display:inline-block;width:3px;height:8px;background:#e9a21e;margin-left:6px;vertical-align:0px"></span><span style="display:inline-block;width:3px;height:8px;background:#e9a21e;margin-left:1px;vertical-align:0px"></span></div>
<svg style="left:29px;top:551px" width="6" height="10"><path d="M0 0l6 5-6 5z" fill="#8d8d8d"/></svg>
<svg style="left:40px;top:548px" width="15" height="17"><rect x="6.5" y="1.5" width="7" height="10" fill="#fff" stroke="#97d66e"/><rect x="3.5" y="3.5" width="7" height="10" fill="#fff" stroke="#7cc956"/><rect x="0.75" y="5.75" width="6.5" height="9.5" fill="#b4ee80" stroke="#33b000" stroke-width="1.5"/><rect x="1.5" y="6.5" width="5" height="3" fill="#dff7c6"/></svg>
<div class="t" id="tr12" style="left:62px;top:548px;font-style:italic;color:#000">律师-继承<span style="display:inline-block;width:3px;height:8px;background:#e9a21e;margin-left:6px;vertical-align:0px"></span><span style="display:inline-block;width:3px;height:8px;background:#e9a21e;margin-left:1px;vertical-align:0px"></span></div>
<svg style="left:29px;top:575px" width="6" height="10"><path d="M0 0l6 5-6 5z" fill="#8d8d8d"/></svg>
<svg style="left:40px;top:572px" width="15" height="17"><rect x="6.5" y="1.5" width="7" height="10" fill="#fff" stroke="#97d66e"/><rect x="3.5" y="3.5" width="7" height="10" fill="#fff" stroke="#7cc956"/><rect x="0.75" y="5.75" width="6.5" height="9.5" fill="#b4ee80" stroke="#33b000" stroke-width="1.5"/><rect x="1.5" y="6.5" width="5" height="3" fill="#dff7c6"/></svg>
<div class="t" id="tr13" style="left:62px;top:572px;font-style:italic;color:#000">律师-交通<span style="display:inline-block;width:3px;height:8px;background:#e9a21e;margin-left:6px;vertical-align:0px"></span><span style="display:inline-block;width:3px;height:8px;background:#e9a21e;margin-left:1px;vertical-align:0px"></span></div>
<svg style="left:29px;top:599px" width="6" height="10"><path d="M0 0l6 5-6 5z" fill="#8d8d8d"/></svg>
<svg style="left:40px;top:596px" width="15" height="17"><rect x="6.5" y="1.5" width="7" height="10" fill="#fff" stroke="#97d66e"/><rect x="3.5" y="3.5" width="7" height="10" fill="#fff" stroke="#7cc956"/><rect x="0.75" y="5.75" width="6.5" height="9.5" fill="#b4ee80" stroke="#33b000" stroke-width="1.5"/><rect x="1.5" y="6.5" width="5" height="3" fill="#dff7c6"/></svg>
<div class="t" id="tr14" style="left:62px;top:596px;font-style:italic;color:#000">律师-金融<span style="display:inline-block;width:3px;height:8px;background:#e9a21e;margin-left:6px;vertical-align:0px"></span><span style="display:inline-block;width:3px;height:8px;background:#e9a21e;margin-left:1px;vertical-align:0px"></span></div>
<svg style="left:29px;top:623px" width="6" height="10"><path d="M0 0l6 5-6 5z" fill="#8d8d8d"/></svg>
<svg style="left:40px;top:620px" width="15" height="17"><rect x="6.5" y="1.5" width="7" height="10" fill="#fff" stroke="#97d66e"/><rect x="3.5" y="3.5" width="7" height="10" fill="#fff" stroke="#7cc956"/><rect x="0.75" y="5.75" width="6.5" height="9.5" fill="#b4ee80" stroke="#33b000" stroke-width="1.5"/><rect x="1.5" y="6.5" width="5" height="3" fill="#dff7c6"/></svg>
<div class="t" id="tr15" style="left:62px;top:620px;font-style:italic;color:#000">律师-经济<span style="display:inline-block;width:3px;height:8px;background:#e9a21e;margin-left:6px;vertical-align:0px"></span><span style="display:inline-block;width:3px;height:8px;background:#e9a21e;margin-left:1px;vertical-align:0px"></span></div>
<svg style="left:29px;top:647px" width="6" height="10"><path d="M0 0l6 5-6 5z" fill="#8d8d8d"/></svg>
<svg style="left:40px;top:644px" width="15" height="17"><rect x="6.5" y="1.5" width="7" height="10" fill="#fff" stroke="#97d66e"/><rect x="3.5" y="3.5" width="7" height="10" fill="#fff" stroke="#7cc956"/><rect x="0.75" y="5.75" width="6.5" height="9.5" fill="#b4ee80" stroke="#33b000" stroke-width="1.5"/><rect x="1.5" y="6.5" width="5" height="3" fill="#dff7c6"/></svg>
<div class="t" id="tr16" style="left:62px;top:644px;font-style:italic;color:#000">律师-劳动/劳务<span style="display:inline-block;width:3px;height:8px;background:#e9a21e;margin-left:6px;vertical-align:0px"></span><span style="display:inline-block;width:3px;height:8px;background:#e9a21e;margin-left:1px;vertical-align:0px"></span></div>
<svg style="left:29px;top:671px" width="6" height="10"><path d="M0 0l6 5-6 5z" fill="#8d8d8d"/></svg>
<svg style="left:40px;top:668px" width="15" height="17"><rect x="6.5" y="1.5" width="7" height="10" fill="#fff" stroke="#97d66e"/><rect x="3.5" y="3.5" width="7" height="10" fill="#fff" stroke="#7cc956"/><rect x="0.75" y="5.75" width="6.5" height="9.5" fill="#b4ee80" stroke="#33b000" stroke-width="1.5"/><rect x="1.5" y="6.5" width="5" height="3" fill="#dff7c6"/></svg>
<div class="t" id="tr17" style="left:62px;top:668px;font-style:italic;color:#000">律师-民事<span style="display:inline-block;width:3px;height:8px;background:#e9a21e;margin-left:6px;vertical-align:0px"></span><span style="display:inline-block;width:3px;height:8px;background:#e9a21e;margin-left:1px;vertical-align:0px"></span></div>
<svg style="left:29px;top:695px" width="6" height="10"><path d="M0 0l6 5-6 5z" fill="#8d8d8d"/></svg>
<svg style="left:40px;top:692px" width="15" height="17"><rect x="6.5" y="1.5" width="7" height="10" fill="#fff" stroke="#97d66e"/><rect x="3.5" y="3.5" width="7" height="10" fill="#fff" stroke="#7cc956"/><rect x="0.75" y="5.75" width="6.5" height="9.5" fill="#b4ee80" stroke="#33b000" stroke-width="1.5"/><rect x="1.5" y="6.5" width="5" height="3" fill="#dff7c6"/></svg>
<div class="t" id="tr18" style="left:62px;top:692px;font-style:italic;color:#000">律师-其他<span style="display:inline-block;width:3px;height:8px;background:#e9a21e;margin-left:6px;vertical-align:0px"></span><span style="display:inline-block;width:3px;height:8px;background:#e9a21e;margin-left:1px;vertical-align:0px"></span></div>
<svg style="left:29px;top:719px" width="6" height="10"><path d="M0 0l6 5-6 5z" fill="#8d8d8d"/></svg>
<svg style="left:40px;top:716px" width="15" height="17"><rect x="6.5" y="1.5" width="7" height="10" fill="#fff" stroke="#97d66e"/><rect x="3.5" y="3.5" width="7" height="10" fill="#fff" stroke="#7cc956"/><rect x="0.75" y="5.75" width="6.5" height="9.5" fill="#b4ee80" stroke="#33b000" stroke-width="1.5"/><rect x="1.5" y="6.5" width="5" height="3" fill="#dff7c6"/></svg>
<div class="t" id="tr19" style="left:62px;top:716px;font-style:italic;color:#000">律师-商业<span style="display:inline-block;width:3px;height:8px;background:#e9a21e;margin-left:6px;vertical-align:0px"></span><span style="display:inline-block;width:3px;height:8px;background:#e9a21e;margin-left:1px;vertical-align:0px"></span></div>
<svg style="left:29px;top:743px" width="6" height="10"><path d="M0 0l6 5-6 5z" fill="#8d8d8d"/></svg>
<svg style="left:40px;top:740px" width="15" height="17"><rect x="6.5" y="1.5" width="7" height="10" fill="#fff" stroke="#97d66e"/><rect x="3.5" y="3.5" width="7" height="10" fill="#fff" stroke="#7cc956"/><rect x="0.75" y="5.75" width="6.5" height="9.5" fill="#b4ee80" stroke="#33b000" stroke-width="1.5"/><rect x="1.5" y="6.5" width="5" height="3" fill="#dff7c6"/></svg>
<div class="t" id="tr20" style="left:62px;top:740px;font-style:italic;color:#000">律师-税务<span style="display:inline-block;width:3px;height:8px;background:#e9a21e;margin-left:6px;vertical-align:0px"></span><span style="display:inline-block;width:3px;height:8px;background:#e9a21e;margin-left:1px;vertical-align:0px"></span></div>
<svg style="left:29px;top:767px" width="6" height="10"><path d="M0 0l6 5-6 5z" fill="#8d8d8d"/></svg>
<svg style="left:40px;top:764px" width="15" height="17"><rect x="6.5" y="1.5" width="7" height="10" fill="#fff" stroke="#97d66e"/><rect x="3.5" y="3.5" width="7" height="10" fill="#fff" stroke="#7cc956"/><rect x="0.75" y="5.75" width="6.5" height="9.5" fill="#b4ee80" stroke="#33b000" stroke-width="1.5"/><rect x="1.5" y="6.5" width="5" height="3" fill="#dff7c6"/></svg>
<div class="t" id="tr21" style="left:62px;top:764px;font-style:italic;color:#000">律师-土地<span style="display:inline-block;width:3px;height:8px;background:#e9a21e;margin-left:6px;vertical-align:0px"></span><span style="display:inline-block;width:3px;height:8px;background:#e9a21e;margin-left:1px;vertical-align:0px"></span></div>
<svg style="left:29px;top:791px" width="6" height="10"><path d="M0 0l6 5-6 5z" fill="#8d8d8d"/></svg>
<svg style="left:40px;top:788px" width="15" height="17"><rect x="6.5" y="1.5" width="7" height="10" fill="#fff" stroke="#97d66e"/><rect x="3.5" y="3.5" width="7" height="10" fill="#fff" stroke="#7cc956"/><rect x="0.75" y="5.75" width="6.5" height="9.5" fill="#b4ee80" stroke="#33b000" stroke-width="1.5"/><rect x="1.5" y="6.5" width="5" height="3" fill="#dff7c6"/></svg>
<div class="t" id="tr22" style="left:62px;top:788px;font-style:italic;color:#000">律师-维权<span style="display:inline-block;width:3px;height:8px;background:#e9a21e;margin-left:6px;vertical-align:0px"></span><span style="display:inline-block;width:3px;height:8px;background:#e9a21e;margin-left:1px;vertical-align:0px"></span></div>
<svg style="left:29px;top:815px" width="6" height="10"><path d="M0 0l6 5-6 5z" fill="#8d8d8d"/></svg>
<svg style="left:40px;top:812px" width="15" height="17"><rect x="6.5" y="1.5" width="7" height="10" fill="#fff" stroke="#97d66e"/><rect x="3.5" y="3.5" width="7" height="10" fill="#fff" stroke="#7cc956"/><rect x="0.75" y="5.75" width="6.5" height="9.5" fill="#b4ee80" stroke="#33b000" stroke-width="1.5"/><rect x="1.5" y="6.5" width="5" height="3" fill="#dff7c6"/></svg>
<div class="t" id="tr23" style="left:62px;top:812px;font-style:italic;color:#000">律师-刑事<span style="display:inline-block;width:3px;height:8px;background:#e9a21e;margin-left:6px;vertical-align:0px"></span><span style="display:inline-block;width:3px;height:8px;background:#e9a21e;margin-left:1px;vertical-align:0px"></span></div>
<svg style="left:29px;top:839px" width="6" height="10"><path d="M0 0l6 5-6 5z" fill="#8d8d8d"/></svg>
<svg style="left:40px;top:836px" width="15" height="17"><rect x="6.5" y="1.5" width="7" height="10" fill="#fff" stroke="#97d66e"/><rect x="3.5" y="3.5" width="7" height="10" fill="#fff" stroke="#7cc956"/><rect x="0.75" y="5.75" width="6.5" height="9.5" fill="#b4ee80" stroke="#33b000" stroke-width="1.5"/><rect x="1.5" y="6.5" width="5" height="3" fill="#dff7c6"/></svg>
<div class="t" id="tr24" style="left:62px;top:836px;font-style:italic;color:#000">律师-医疗<span style="display:inline-block;width:3px;height:8px;background:#e9a21e;margin-left:6px;vertical-align:0px"></span><span style="display:inline-block;width:3px;height:8px;background:#e9a21e;margin-left:1px;vertical-align:0px"></span></div>
<svg style="left:29px;top:863px" width="6" height="10"><path d="M0 0l6 5-6 5z" fill="#8d8d8d"/></svg>
<svg style="left:40px;top:860px" width="15" height="17"><rect x="6.5" y="1.5" width="7" height="10" fill="#fff" stroke="#97d66e"/><rect x="3.5" y="3.5" width="7" height="10" fill="#fff" stroke="#7cc956"/><rect x="0.75" y="5.75" width="6.5" height="9.5" fill="#b4ee80" stroke="#33b000" stroke-width="1.5"/><rect x="1.5" y="6.5" width="5" height="3" fill="#dff7c6"/></svg>
<div class="t" id="tr25" style="left:62px;top:860px;font-style:italic;color:#000">律师-遗产<span style="display:inline-block;width:3px;height:8px;background:#e9a21e;margin-left:6px;vertical-align:0px"></span><span style="display:inline-block;width:3px;height:8px;background:#e9a21e;margin-left:1px;vertical-align:0px"></span></div>
<svg style="left:29px;top:887px" width="6" height="10"><path d="M0 0l6 5-6 5z" fill="#8d8d8d"/></svg>
<svg style="left:40px;top:884px" width="15" height="17"><rect x="6.5" y="1.5" width="7" height="10" fill="#fff" stroke="#97d66e"/><rect x="3.5" y="3.5" width="7" height="10" fill="#fff" stroke="#7cc956"/><rect x="0.75" y="5.75" width="6.5" height="9.5" fill="#b4ee80" stroke="#33b000" stroke-width="1.5"/><rect x="1.5" y="6.5" width="5" height="3" fill="#dff7c6"/></svg>
<div class="t" id="tr26" style="left:62px;top:884px;font-style:italic;color:#000">律师-债务<span style="display:inline-block;width:3px;height:8px;background:#e9a21e;margin-left:6px;vertical-align:0px"></span><span style="display:inline-block;width:3px;height:8px;background:#e9a21e;margin-left:1px;vertical-align:0px"></span></div>
<svg style="left:29px;top:911px" width="6" height="10"><path d="M0 0l6 5-6 5z" fill="#8d8d8d"/></svg>
<svg style="left:40px;top:908px" width="15" height="17"><rect x="6.5" y="1.5" width="7" height="10" fill="#fff" stroke="#97d66e"/><rect x="3.5" y="3.5" width="7" height="10" fill="#fff" stroke="#7cc956"/><rect x="0.75" y="5.75" width="6.5" height="9.5" fill="#b4ee80" stroke="#33b000" stroke-width="1.5"/><rect x="1.5" y="6.5" width="5" height="3" fill="#dff7c6"/></svg>
<div class="t" id="tr27" style="left:62px;top:908px;font-style:italic;color:#000">律师-职务<span style="display:inline-block;width:3px;height:8px;background:#e9a21e;margin-left:6px;vertical-align:0px"></span><span style="display:inline-block;width:3px;height:8px;background:#e9a21e;margin-left:1px;vertical-align:0px"></span></div>
<svg style="left:29px;top:935px" width="6" height="10"><path d="M0 0l6 5-6 5z" fill="#8d8d8d"/></svg>
<svg style="left:40px;top:932px" width="15" height="17"><rect x="6.5" y="1.5" width="7" height="10" fill="#fff" stroke="#97d66e"/><rect x="3.5" y="3.5" width="7" height="10" fill="#fff" stroke="#7cc956"/><rect x="0.75" y="5.75" width="6.5" height="9.5" fill="#b4ee80" stroke="#33b000" stroke-width="1.5"/><rect x="1.5" y="6.5" width="5" height="3" fill="#dff7c6"/></svg>
<div class="t" id="tr28" style="left:62px;top:932px;font-style:italic;color:#000">律师-专利<span style="display:inline-block;width:3px;height:8px;background:#e9a21e;margin-left:6px;vertical-align:0px"></span><span style="display:inline-block;width:3px;height:8px;background:#e9a21e;margin-left:1px;vertical-align:0px"></span></div>
<div style="left:0px;top:971px;width:252px;height:1px;background:#8b9bae"></div>
<div style="left:0px;top:972px;width:252px;height:34px;background:linear-gradient(#e6eaef,#dde2e8)"></div>
<div class="t" style="left:42px;top:982px;color:#111">推广工具</div>
<div style="left:0px;top:1006px;width:252px;height:1px;background:#8b9bae"></div>
<div style="left:0px;top:1007px;width:252px;height:32px;background:linear-gradient(#e6eaef,#dde2e8)"></div>
<svg style="left:11px;top:1015px" width="17" height="16"><path d="M4 0.5h8l4 4v11H4z" fill="#fbfbfb" stroke="#999"/><path d="M12 0.5v4h4" fill="none" stroke="#999"/><path d="M0 6h9l3 3-3 3H0z" fill="#f08a28"/></svg>
<div class="t" style="left:42px;top:1018px;color:#111">筛选模板</div>
<svg style="left:228px;top:1020px" width="8" height="5"><path d="M0 5h8L4 0z" fill="#111"/></svg>
<div style="left:252px;top:164px;width:13px;height:875px;background:#d8dee6"></div>
<div style="left:253px;top:582px;width:10px;height:40px;background:#5f7b9b"></div>
<svg style="left:256px;top:598px" width="5" height="8"><path d="M5 0v8L0 4z" fill="#fff"/></svg>
<div style="left:265px;top:164px;width:1px;height:875px;background:#55677b"></div><div style="left:266px;top:164px;width:1653px;height:646px;background:#fff"></div>
<div class="t" style="left:267px;top:175px;width:100px;text-align:center;color:#333">高级样式</div>
<div style="left:367px;top:176px;width:1px;height:18px;border-left:1px dotted #c8c8c8"></div>
<div class="t" style="left:367px;top:175px;width:100px;text-align:center;color:#333">关键词</div>
<div style="left:467px;top:169px;width:100px;height:26px;background:#3a5a7f"></div>
<div class="t" style="left:467px;top:175px;width:100px;text-align:center;color:#fff">创意</div>
<div class="t" style="left:567px;top:175px;width:100px;text-align:center;color:#333">推广单元</div>
<div style="left:667px;top:176px;width:1px;height:18px;border-left:1px dotted #c8c8c8"></div>
<div class="t" style="left:667px;top:175px;width:100px;text-align:center;color:#333">推广计划</div>
<div style="left:767px;top:176px;width:1px;height:18px;border-left:1px dotted #c8c8c8"></div>
<div class="t" style="left:767px;top:175px;width:100px;text-align:center;color:#333">项目</div>
<div style="left:867px;top:176px;width:1px;height:18px;border-left:1px dotted #c8c8c8"></div>
<div class="t" style="left:867px;top:175px;width:100px;text-align:center;color:#333">账户</div>
<div class="t" style="left:1795px;top:172px;color:#222">下载/查看数据信息</div>
<svg style="left:1907px;top:178px" width="8" height="5"><path d="M0 0h8L4 5z" fill="#1e7ad8"/></svg>
<div style="left:266px;top:194px;width:1520px;height:2px;background:#34527a"></div>
<div style="left:1786px;top:195px;width:133px;height:1px;background:#6f86a3"></div>
<div style="left:266px;top:196px;width:1653px;height:34px;background:linear-gradient(#f6f7f8,#e9ebee)"></div>
<div style="left:266px;top:230px;width:1653px;height:1px;background:#c8ced6"></div>
<svg style="left:276px;top:205px" width="16" height="16"><rect x="1" y="1" width="14" height="14" fill="none" stroke="#2a8ae6" stroke-width="2"/><path d="M8 4v8M4 8h8" stroke="#2a8ae6" stroke-width="2"/></svg>
<div class="t" style="left:298px;top:205px;">添加</div>
<svg style="left:344px;top:204px" width="16" height="17"><path d="M1 3h14M5 3V1h6v2" fill="none" stroke="#2a8ae6" stroke-width="2"/><path d="M3 5v11h10V5M6.5 7v7M9.5 7v7" fill="none" stroke="#2a8ae6" stroke-width="2"/></svg>
<div class="t" style="left:362px;top:205px;">删除</div>
<svg style="left:396px;top:212px" width="8" height="5"><path d="M0 0h8L4 5z" fill="#2a8ae6"/></svg>
<svg style="left:421px;top:205px" width="17" height="17"><path d="M3 15V3h10" fill="none" stroke="#2a8ae6" stroke-width="2"/><path d="M1 12V1h10" fill="none" stroke="#2a8ae6" stroke-width="1.2"/><path d="M6 8v7h3" fill="none" stroke="#2a8ae6" stroke-width="2"/><path d="M13 9v7M9.5 12.5h7" stroke="#2a8ae6" stroke-width="2"/></svg>
<div class="t" style="left:443px;top:205px;">批量添加/更新</div>
<div style="left:538px;top:204px;width:83px;height:19px;background:#fde6b0;border:1px solid #f7d488"></div>
<svg style="left:542px;top:205px" width="16" height="16"><rect x="0" y="0" width="16" height="16" rx="4" fill="#dc1820"/><text x="8" y="10.6" font-size="6.6" font-family="Liberation Sans" font-weight="bold" fill="#fff" text-anchor="middle" textLength="13" lengthAdjust="spacingAndGlyphs">NEW</text></svg>
<div class="t" style="left:564px;top:206px;">文案推荐</div>
<svg style="left:630px;top:205px" width="17" height="17"><rect x="1" y="1" width="14" height="14" fill="none" stroke="#2a8ae6" stroke-width="2"/><path d="M4 5h7M7.5 5v8" stroke="#2a8ae6" stroke-width="2"/><path d="M11 10h5M13 14h3" stroke="#2a8ae6" stroke-width="1.5"/></svg>
<div class="t" style="left:647px;top:204px;">文字替换</div>
<svg style="left:706px;top:212px" width="8" height="5"><path d="M0 0h8L4 5z" fill="#2a8ae6"/></svg>
<div style="left:733px;top:206px;width:1px;height:14px;background:#8fb8e8"></div>
<svg style="left:761px;top:205px" width="17" height="17"><path d="M12 8V1H1v14h7" fill="none" stroke="#2a8ae6" stroke-width="2"/><path d="M4 5h5M4 8h4" stroke="#2a8ae6" stroke-width="1.6"/><path d="M10 12h6M13 9.5l-3 2.5 3 2.5" fill="none" stroke="#2a8ae6" stroke-width="1.6"/></svg>
<div class="t" style="left:783px;top:205px;">还原</div>
<svg style="left:830px;top:205px" width="16" height="16"><path d="M2 15V6l3-5 3 3 3-1 3 4v8z" fill="#b8b8b8"/><path d="M6 15v-6h5v6" fill="#9a9a9a"/></svg>
<div class="t" style="left:851px;top:205px;color:#a8a8a8">激活</div>
<svg style="left:897px;top:205px" width="16" height="16"><rect x="1" y="1" width="14" height="14" fill="none" stroke="#2a8ae6" stroke-width="2"/><rect x="1" y="4" width="14" height="3" fill="#2a8ae6"/><rect x="4" y="9" width="8" height="4" fill="none" stroke="#2a8ae6" stroke-width="1.5"/></svg>
<div class="t" style="left:919px;top:205px;">查看搜索词</div>
<svg style="left:997px;top:205px" width="16" height="16"><rect x="0" y="0" width="16" height="16" fill="#2a8ae6"/><path d="M4 13V8M8 13V5M12 13V3" stroke="#fff" stroke-width="2"/></svg>
<div class="t" style="left:1019px;top:204px;">查看报告</div>
<svg style="left:1085px;top:205px" width="17" height="17"><path d="M8 1H1v15h7M8 1h2M8 16h2" fill="none" stroke="#2a8ae6" stroke-width="2"/><path d="M5 8.5h10M11.5 5l3.5 3.5-3.5 3.5" fill="none" stroke="#2a8ae6" stroke-width="2"/></svg>
<div class="t" style="left:1102px;top:205px;">导出<span style="font-family:'Liberation Mono',monospace;font-size:10px">Excel</span></div>
<svg style="left:1168px;top:212px" width="8" height="5"><path d="M0 0h8L4 5z" fill="#2a8ae6"/></svg>
<div class="t" style="left:1881px;top:205px;font-family:'Liberation Mono',monospace;font-size:10px;color:#222">1/406</div><div style="left:266px;top:231px;width:1635px;height:25px;background:linear-gradient(#f7f8f9,#eef1f4)"></div>
<div style="left:266px;top:256px;width:1635px;height:1px;background:#c5cdd6"></div>
<div style="left:296px;top:233px;width:1px;height:23px;background:#d5dbe2"></div>
<div style="left:297px;top:233px;width:1px;height:23px;background:#fbfcfd"></div>
<div style="left:326px;top:233px;width:1px;height:23px;background:#d5dbe2"></div>
<div style="left:327px;top:233px;width:1px;height:23px;background:#fbfcfd"></div>
<div class="t" style="left:329px;top:236px;width:460px;overflow:hidden;color:#333">创意标题</div>
<div style="left:790px;top:233px;width:1px;height:23px;background:#d5dbe2"></div>
<div style="left:791px;top:233px;width:1px;height:23px;background:#fbfcfd"></div>
<div class="t" style="left:793px;top:236px;width:96px;overflow:hidden;color:#333">创意描述1</div>
<div style="left:890px;top:233px;width:1px;height:23px;background:#d5dbe2"></div>
<div style="left:891px;top:233px;width:1px;height:23px;background:#fbfcfd"></div>
<div class="t" style="left:893px;top:236px;width:96px;overflow:hidden;color:#333">创意描述2</div>
<div style="left:990px;top:233px;width:1px;height:23px;background:#d5dbe2"></div>
<div style="left:991px;top:233px;width:1px;height:23px;background:#fbfcfd"></div>
<div class="t" style="left:993px;top:236px;width:146px;overflow:hidden;color:#333">计算机端落地页链接</div>
<div style="left:1140px;top:233px;width:1px;height:23px;background:#d5dbe2"></div>
<div style="left:1141px;top:233px;width:1px;height:23px;background:#fbfcfd"></div>
<div class="t" style="left:1143px;top:236px;width:146px;overflow:hidden;color:#333">移动端落地页链接</div>
<div style="left:1290px;top:233px;width:1px;height:23px;background:#d5dbe2"></div>
<div style="left:1291px;top:233px;width:1px;height:23px;background:#fbfcfd"></div>
<div class="t" style="left:1293px;top:236px;width:86px;overflow:hidden;color:#333">创意状态</div>
<div style="left:1380px;top:233px;width:1px;height:23px;background:#d5dbe2"></div>
<div style="left:1381px;top:233px;width:1px;height:23px;background:#fbfcfd"></div>
<div class="t" style="left:1383px;top:236px;width:86px;overflow:hidden;color:#333">启用/暂停</div>
<div style="left:1470px;top:233px;width:1px;height:23px;background:#d5dbe2"></div>
<div style="left:1471px;top:233px;width:1px;height:23px;background:#fbfcfd"></div>
<div class="t" style="left:1473px;top:236px;width:96px;overflow:hidden;color:#333">推广计划名称</div>
<div style="left:1570px;top:233px;width:1px;height:23px;background:#d5dbe2"></div>
<div style="left:1571px;top:233px;width:1px;height:23px;background:#fbfcfd"></div>
<div class="t" style="left:1573px;top:236px;width:96px;overflow:hidden;color:#333">推广单元名称</div>
<div style="left:1670px;top:233px;width:1px;height:23px;background:#d5dbe2"></div>
<div style="left:1671px;top:233px;width:1px;height:23px;background:#fbfcfd"></div>
<div class="t" style="left:1673px;top:236px;width:96px;overflow:hidden;color:#333">创意ID</div>
<div style="left:1770px;top:233px;width:1px;height:23px;background:#d5dbe2"></div>
<div style="left:1771px;top:233px;width:1px;height:23px;background:#fbfcfd"></div>
<div class="t" style="left:1773px;top:236px;width:96px;overflow:hidden;color:#333">计划ID</div>
<div style="left:1870px;top:233px;width:1px;height:23px;background:#d5dbe2"></div>
<div style="left:1871px;top:233px;width:1px;height:23px;background:#fbfcfd"></div>
<div class="t" style="left:1873px;top:236px;width:27px;overflow:hidden;color:#333">单元ID</div>
<div style="left:1900px;top:231px;width:19px;height:37px;background:#f3f4f6;border-left:1px solid #d9dde2;border-bottom:1px solid #d9dde2"></div>
<svg style="left:1904px;top:244px" width="11" height="11"><path d="M9.29 4.57 L10.91 4.53 L10.91 6.47 L9.29 6.43 L8.83 7.52 L10.01 8.64 L8.64 10.01 L7.52 8.83 L6.43 9.29 L6.47 10.91 L4.53 10.91 L4.57 9.29 L3.48 8.83 L2.36 10.01 L0.99 8.64 L2.17 7.52 L1.71 6.43 L0.09 6.47 L0.09 4.53 L1.71 4.57 L2.17 3.48 L0.99 2.36 L2.36 0.99 L3.48 2.17 L4.57 1.71 L4.53 0.09 L6.47 0.09 L6.43 1.71 L7.52 2.17 L8.64 0.99 L10.01 2.36 L8.83 3.48z M5.5 3.7a1.8 1.8 0 1 0 0.01 0z" fill="#8c8c8c" fill-rule="evenodd"/></svg>
<div style="left:266px;top:257px;width:1636px;height:22px;background:#fdd66d;overflow:hidden"><svg style="left:10px;top:5px" width="12" height="12"><path d="M4.5 0.5h3v4h4v3h-4v4h-3v-4h-4v-3h4z" fill="#a6e884" stroke="#2a9418" stroke-width="1"/><path d="M6 2v8M2 6h8" stroke="#d6f8c2" stroke-width="0.8"/></svg><div class="t" style="left:64px;top:3px">{专业律师为您服务}_1对1法律服务_专业律师事务所</div><div class="t" style="left:528px;top:3px">{专业律师为您...</div><div class="t" style="left:628px;top:3px">{专业律师为您...</div><div class="t" style="left:729px;top:3px">-</div><div class="t" style="left:879px;top:3px">-</div><div class="t" style="left:1029px;top:3px">本地新增</div><div class="t" style="left:1118px;top:3px">启用</div><div class="t" style="left:1208px;top:3px">律师-维权</div><div class="t" style="left:1308px;top:3px">律师-城市词</div><div class="t" style="left:1408px;top:3px">-</div><div class="t" style="left:1508px;top:3px">-</div><div class="t" style="left:1608px;top:3px">-</div></div>
<div style="left:266px;top:279px;width:1636px;height:22px;background:#f2f5f7;overflow:hidden"><svg style="left:10px;top:5px" width="12" height="12"><path d="M4.5 0.5h3v4h4v3h-4v4h-3v-4h-4v-3h4z" fill="#a6e884" stroke="#2a9418" stroke-width="1"/><path d="M6 2v8M2 6h8" stroke="#d6f8c2" stroke-width="0.8"/></svg><div class="t" style="left:64px;top:3px">{专业律师为您服务}_1对1法律服务_咨询不收费</div><div class="t" style="left:528px;top:3px">{专业律师为您...</div><div class="t" style="left:628px;top:3px">{专业律师为您...</div><div class="t" style="left:729px;top:3px">-</div><div class="t" style="left:879px;top:3px">-</div><div class="t" style="left:1029px;top:3px">本地新增</div><div class="t" style="left:1118px;top:3px">启用</div><div class="t" style="left:1208px;top:3px">律师-维权</div><div class="t" style="left:1308px;top:3px">律师-城市词</div><div class="t" style="left:1408px;top:3px">-</div><div class="t" style="left:1508px;top:3px">-</div><div class="t" style="left:1608px;top:3px">-</div></div>
<div style="left:266px;top:301px;width:1636px;height:22px;background:#fff;overflow:hidden"><svg style="left:10px;top:5px" width="12" height="12"><path d="M4.5 0.5h3v4h4v3h-4v4h-3v-4h-4v-3h4z" fill="#a6e884" stroke="#2a9418" stroke-width="1"/><path d="M6 2v8M2 6h8" stroke="#d6f8c2" stroke-width="0.8"/></svg><div class="t" style="left:64px;top:3px">{专业律师为您服务}_咨询不收费_提供法律解决方案！</div><div class="t" style="left:528px;top:3px">{专业律师为您...</div><div class="t" style="left:628px;top:3px">{专业律师为您...</div><div class="t" style="left:729px;top:3px">-</div><div class="t" style="left:879px;top:3px">-</div><div class="t" style="left:1029px;top:3px">本地新增</div><div class="t" style="left:1118px;top:3px">启用</div><div class="t" style="left:1208px;top:3px">律师-维权</div><div class="t" style="left:1308px;top:3px">律师-城市词</div><div class="t" style="left:1408px;top:3px">-</div><div class="t" style="left:1508px;top:3px">-</div><div class="t" style="left:1608px;top:3px">-</div></div>
<div style="left:266px;top:323px;width:1636px;height:22px;background:#f2f5f7;overflow:hidden"><svg style="left:10px;top:5px" width="12" height="12"><path d="M4.5 0.5h3v4h4v3h-4v4h-3v-4h-4v-3h4z" fill="#a6e884" stroke="#2a9418" stroke-width="1"/><path d="M6 2v8M2 6h8" stroke="#d6f8c2" stroke-width="0.8"/></svg><div class="t" style="left:64px;top:3px">{专业律师为您服务}_咨询不收费_专业律师团队为您服务！</div><div class="t" style="left:528px;top:3px">{专业律师为您...</div><div class="t" style="left:628px;top:3px">{专业律师为您...</div><div class="t" style="left:729px;top:3px">-</div><div class="t" style="left:879px;top:3px">-</div><div class="t" style="left:1029px;top:3px">本地新增</div><div class="t" style="left:1118px;top:3px">启用</div><div class="t" style="left:1208px;top:3px">律师-维权</div><div class="t" style="left:1308px;top:3px">律师-城市词</div><div class="t" style="left:1408px;top:3px">-</div><div class="t" style="left:1508px;top:3px">-</div><div class="t" style="left:1608px;top:3px">-</div></div>
<div style="left:266px;top:345px;width:1636px;height:22px;background:#fff;overflow:hidden"><svg style="left:10px;top:5px" width="12" height="12"><path d="M4.5 0.5h3v4h4v3h-4v4h-3v-4h-4v-3h4z" fill="#a6e884" stroke="#2a9418" stroke-width="1"/><path d="M6 2v8M2 6h8" stroke="#d6f8c2" stroke-width="0.8"/></svg><div class="t" style="left:64px;top:3px">{专业律师为您服务}_咨询不收费_专业{专业律师为您服务}</div><div class="t" style="left:528px;top:3px">{专业律师为您...</div><div class="t" style="left:628px;top:3px">{专业律师为您...</div><div class="t" style="left:729px;top:3px">-</div><div class="t" style="left:879px;top:3px">-</div><div class="t" style="left:1029px;top:3px">本地新增</div><div class="t" style="left:1118px;top:3px">启用</div><div class="t" style="left:1208px;top:3px">律师-维权</div><div class="t" style="left:1308px;top:3px">律师-城市词</div><div class="t" style="left:1408px;top:3px">-</div><div class="t" style="left:1508px;top:3px">-</div><div class="t" style="left:1608px;top:3px">-</div></div>
<div style="left:266px;top:367px;width:1636px;height:22px;background:#f2f5f7;overflow:hidden"><svg style="left:10px;top:5px" width="12" height="12"><path d="M4.5 0.5h3v4h4v3h-4v4h-3v-4h-4v-3h4z" fill="#a6e884" stroke="#2a9418" stroke-width="1"/><path d="M6 2v8M2 6h8" stroke="#d6f8c2" stroke-width="0.8"/></svg><div class="t" style="left:64px;top:3px">{专业律师为您服务}_咨询不收费_满以后再委托</div><div class="t" style="left:528px;top:3px">{专业律师为您...</div><div class="t" style="left:628px;top:3px">{专业律师为您...</div><div class="t" style="left:729px;top:3px">-</div><div class="t" style="left:879px;top:3px">-</div><div class="t" style="left:1029px;top:3px">本地新增</div><div class="t" style="left:1118px;top:3px">启用</div><div class="t" style="left:1208px;top:3px">律师-维权</div><div class="t" style="left:1308px;top:3px">律师-城市词</div><div class="t" style="left:1408px;top:3px">-</div><div class="t" style="left:1508px;top:3px">-</div><div class="t" style="left:1608px;top:3px">-</div></div>
<div style="left:266px;top:389px;width:1636px;height:22px;background:#fff;overflow:hidden"><svg style="left:10px;top:5px" width="12" height="12"><path d="M4.5 0.5h3v4h4v3h-4v4h-3v-4h-4v-3h4z" fill="#a6e884" stroke="#2a9418" stroke-width="1"/><path d="M6 2v8M2 6h8" stroke="#d6f8c2" stroke-width="0.8"/></svg><div class="t" style="left:64px;top:3px">{专业律师为您服务}_咨询不收费_快速解决您的法律难题</div><div class="t" style="left:528px;top:3px">{专业律师为您...</div><div class="t" style="left:628px;top:3px">{专业律师为您...</div><div class="t" style="left:729px;top:3px">-</div><div class="t" style="left:879px;top:3px">-</div><div class="t" style="left:1029px;top:3px">本地新增</div><div class="t" style="left:1118px;top:3px">启用</div><div class="t" style="left:1208px;top:3px">律师-维权</div><div class="t" style="left:1308px;top:3px">律师-城市词</div><div class="t" style="left:1408px;top:3px">-</div><div class="t" style="left:1508px;top:3px">-</div><div class="t" style="left:1608px;top:3px">-</div></div>
<div style="left:266px;top:411px;width:1636px;height:22px;background:#f2f5f7;overflow:hidden"><svg style="left:10px;top:5px" width="12" height="12"><path d="M4.5 0.5h3v4h4v3h-4v4h-3v-4h-4v-3h4z" fill="#a6e884" stroke="#2a9418" stroke-width="1"/><path d="M6 2v8M2 6h8" stroke="#d6f8c2" stroke-width="0.8"/></svg><div class="t" style="left:64px;top:3px">{专业律师为您服务}_1对1法律服务_专业律师事务所</div><div class="t" style="left:528px;top:3px">{专业律师为您...</div><div class="t" style="left:628px;top:3px">{专业律师为您...</div><div class="t" style="left:729px;top:3px">-</div><div class="t" style="left:879px;top:3px">-</div><div class="t" style="left:1029px;top:3px">本地新增</div><div class="t" style="left:1118px;top:3px">启用</div><div class="t" style="left:1208px;top:3px">律师-维权</div><div class="t" style="left:1308px;top:3px">律师</div><div class="t" style="left:1408px;top:3px">-</div><div class="t" style="left:1508px;top:3px">-</div><div class="t" style="left:1608px;top:3px">-</div></div>
<div style="left:266px;top:433px;width:1636px;height:22px;background:#fff;overflow:hidden"><svg style="left:10px;top:5px" width="12" height="12"><path d="M4.5 0.5h3v4h4v3h-4v4h-3v-4h-4v-3h4z" fill="#a6e884" stroke="#2a9418" stroke-width="1"/><path d="M6 2v8M2 6h8" stroke="#d6f8c2" stroke-width="0.8"/></svg><div class="t" style="left:64px;top:3px">{专业律师为您服务}_1对1法律服务_咨询不收费</div><div class="t" style="left:528px;top:3px">{专业律师为您...</div><div class="t" style="left:628px;top:3px">{专业律师为您...</div><div class="t" style="left:729px;top:3px">-</div><div class="t" style="left:879px;top:3px">-</div><div class="t" style="left:1029px;top:3px">本地新增</div><div class="t" style="left:1118px;top:3px">启用</div><div class="t" style="left:1208px;top:3px">律师-维权</div><div class="t" style="left:1308px;top:3px">律师</div><div class="t" style="left:1408px;top:3px">-</div><div class="t" style="left:1508px;top:3px">-</div><div class="t" style="left:1608px;top:3px">-</div></div>
<div style="left:266px;top:455px;width:1636px;height:22px;background:#f2f5f7;overflow:hidden"><svg style="left:10px;top:5px" width="12" height="12"><path d="M4.5 0.5h3v4h4v3h-4v4h-3v-4h-4v-3h4z" fill="#a6e884" stroke="#2a9418" stroke-width="1"/><path d="M6 2v8M2 6h8" stroke="#d6f8c2" stroke-width="0.8"/></svg><div class="t" style="left:64px;top:3px">{专业律师为您服务}_咨询不收费_提供法律解决方案！</div><div class="t" style="left:528px;top:3px">{专业律师为您...</div><div class="t" style="left:628px;top:3px">{专业律师为您...</div><div class="t" style="left:729px;top:3px">-</div><div class="t" style="left:879px;top:3px">-</div><div class="t" style="left:1029px;top:3px">本地新增</div><div class="t" style="left:1118px;top:3px">启用</div><div class="t" style="left:1208px;top:3px">律师-维权</div><div class="t" style="left:1308px;top:3px">律师</div><div class="t" style="left:1408px;top:3px">-</div><div class="t" style="left:1508px;top:3px">-</div><div class="t" style="left:1608px;top:3px">-</div></div>
<div style="left:266px;top:477px;width:1636px;height:22px;background:#fff;overflow:hidden"><svg style="left:10px;top:5px" width="12" height="12"><path d="M4.5 0.5h3v4h4v3h-4v4h-3v-4h-4v-3h4z" fill="#a6e884" stroke="#2a9418" stroke-width="1"/><path d="M6 2v8M2 6h8" stroke="#d6f8c2" stroke-width="0.8"/></svg><div class="t" style="left:64px;top:3px">{专业律师为您服务}_咨询不收费_专业律师团队为您服务！</div><div class="t" style="left:528px;top:3px">{专业律师为您...</div><div class="t" style="left:628px;top:3px">{专业律师为您...</div><div class="t" style="left:729px;top:3px">-</div><div class="t" style="left:879px;top:3px">-</div><div class="t" style="left:1029px;top:3px">本地新增</div><div class="t" style="left:1118px;top:3px">启用</div><div class="t" style="left:1208px;top:3px">律师-维权</div><div class="t" style="left:1308px;top:3px">律师</div><div class="t" style="left:1408px;top:3px">-</div><div class="t" style="left:1508px;top:3px">-</div><div class="t" style="left:1608px;top:3px">-</div></div>
<div style="left:266px;top:499px;width:1636px;height:22px;background:#f2f5f7;overflow:hidden"><svg style="left:10px;top:5px" width="12" height="12"><path d="M4.5 0.5h3v4h4v3h-4v4h-3v-4h-4v-3h4z" fill="#a6e884" stroke="#2a9418" stroke-width="1"/><path d="M6 2v8M2 6h8" stroke="#d6f8c2" stroke-width="0.8"/></svg><div class="t" style="left:64px;top:3px">{专业律师为您服务}_咨询不收费_专业{专业律师为您服务}</div><div class="t" style="left:528px;top:3px">{专业律师为您...</div><div class="t" style="left:628px;top:3px">{专业律师为您...</div><div class="t" style="left:729px;top:3px">-</div><div class="t" style="left:879px;top:3px">-</div><div class="t" style="left:1029px;top:3px">本地新增</div><div class="t" style="left:1118px;top:3px">启用</div><div class="t" style="left:1208px;top:3px">律师-维权</div><div class="t" style="left:1308px;top:3px">律师</div><div class="t" style="left:1408px;top:3px">-</div><div class="t" style="left:1508px;top:3px">-</div><div class="t" style="left:1608px;top:3px">-</div></div>
<div style="left:266px;top:521px;width:1636px;height:22px;background:#fff;overflow:hidden"><svg style="left:10px;top:5px" width="12" height="12"><path d="M4.5 0.5h3v4h4v3h-4v4h-3v-4h-4v-3h4z" fill="#a6e884" stroke="#2a9418" stroke-width="1"/><path d="M6 2v8M2 6h8" stroke="#d6f8c2" stroke-width="0.8"/></svg><div class="t" style="left:64px;top:3px">{专业律师为您服务}_咨询不收费_满以后再委托</div><div class="t" style="left:528px;top:3px">{专业律师为您...</div><div class="t" style="left:628px;top:3px">{专业律师为您...</div><div class="t" style="left:729px;top:3px">-</div><div class="t" style="left:879px;top:3px">-</div><div class="t" style="left:1029px;top:3px">本地新增</div><div class="t" style="left:1118px;top:3px">启用</div><div class="t" style="left:1208px;top:3px">律师-维权</div><div class="t" style="left:1308px;top:3px">律师</div><div class="t" style="left:1408px;top:3px">-</div><div class="t" style="left:1508px;top:3px">-</div><div class="t" style="left:1608px;top:3px">-</div></div>
<div style="left:266px;top:543px;width:1636px;height:22px;background:#f2f5f7;overflow:hidden"><svg style="left:10px;top:5px" width="12" height="12"><path d="M4.5 0.5h3v4h4v3h-4v4h-3v-4h-4v-3h4z" fill="#a6e884" stroke="#2a9418" stroke-width="1"/><path d="M6 2v8M2 6h8" stroke="#d6f8c2" stroke-width="0.8"/></svg><div class="t" style="left:64px;top:3px">{专业律师为您服务}_咨询不收费_快速解决您的法律难题</div><div class="t" style="left:528px;top:3px">{专业律师为您...</div><div class="t" style="left:628px;top:3px">{专业律师为您...</div><div class="t" style="left:729px;top:3px">-</div><div class="t" style="left:879px;top:3px">-</div><div class="t" style="left:1029px;top:3px">本地新增</div><div class="t" style="left:1118px;top:3px">启用</div><div class="t" style="left:1208px;top:3px">律师-维权</div><div class="t" style="left:1308px;top:3px">律师</div><div class="t" style="left:1408px;top:3px">-</div><div class="t" style="left:1508px;top:3px">-</div><div class="t" style="left:1608px;top:3px">-</div></div>
<div style="left:266px;top:565px;width:1636px;height:22px;background:#fff;overflow:hidden"><svg style="left:10px;top:5px" width="12" height="12"><path d="M4.5 0.5h3v4h4v3h-4v4h-3v-4h-4v-3h4z" fill="#a6e884" stroke="#2a9418" stroke-width="1"/><path d="M6 2v8M2 6h8" stroke="#d6f8c2" stroke-width="0.8"/></svg><div class="t" style="left:64px;top:3px">{专业律师为您服务}_1对1法律服务_专业律师事务所</div><div class="t" style="left:528px;top:3px">{专业律师为您...</div><div class="t" style="left:628px;top:3px">{专业律师为您...</div><div class="t" style="left:729px;top:3px">-</div><div class="t" style="left:879px;top:3px">-</div><div class="t" style="left:1029px;top:3px">本地新增</div><div class="t" style="left:1118px;top:3px">启用</div><div class="t" style="left:1208px;top:3px">律师-保险理赔</div><div class="t" style="left:1308px;top:3px">律师-城市词</div><div class="t" style="left:1408px;top:3px">-</div><div class="t" style="left:1508px;top:3px">-</div><div class="t" style="left:1608px;top:3px">-</div></div>
<div style="left:266px;top:587px;width:1636px;height:22px;background:#f2f5f7;overflow:hidden"><svg style="left:10px;top:5px" width="12" height="12"><path d="M4.5 0.5h3v4h4v3h-4v4h-3v-4h-4v-3h4z" fill="#a6e884" stroke="#2a9418" stroke-width="1"/><path d="M6 2v8M2 6h8" stroke="#d6f8c2" stroke-width="0.8"/></svg><div class="t" style="left:64px;top:3px">{专业律师为您服务}_1对1法律服务_咨询不收费</div><div class="t" style="left:528px;top:3px">{专业律师为您...</div><div class="t" style="left:628px;top:3px">{专业律师为您...</div><div class="t" style="left:729px;top:3px">-</div><div class="t" style="left:879px;top:3px">-</div><div class="t" style="left:1029px;top:3px">本地新增</div><div class="t" style="left:1118px;top:3px">启用</div><div class="t" style="left:1208px;top:3px">律师-保险理赔</div><div class="t" style="left:1308px;top:3px">律师-城市词</div><div class="t" style="left:1408px;top:3px">-</div><div class="t" style="left:1508px;top:3px">-</div><div class="t" style="left:1608px;top:3px">-</div></div>
<div style="left:266px;top:609px;width:1636px;height:22px;background:#fff;overflow:hidden"><svg style="left:10px;top:5px" width="12" height="12"><path d="M4.5 0.5h3v4h4v3h-4v4h-3v-4h-4v-3h4z" fill="#a6e884" stroke="#2a9418" stroke-width="1"/><path d="M6 2v8M2 6h8" stroke="#d6f8c2" stroke-width="0.8"/></svg><div class="t" style="left:64px;top:3px">{专业律师为您服务}_咨询不收费_提供法律解决方案！</div><div class="t" style="left:528px;top:3px">{专业律师为您...</div><div class="t" style="left:628px;top:3px">{专业律师为您...</div><div class="t" style="left:729px;top:3px">-</div><div class="t" style="left:879px;top:3px">-</div><div class="t" style="left:1029px;top:3px">本地新增</div><div class="t" style="left:1118px;top:3px">启用</div><div class="t" style="left:1208px;top:3px">律师-保险理赔</div><div class="t" style="left:1308px;top:3px">律师-城市词</div><div class="t" style="left:1408px;top:3px">-</div><div class="t" style="left:1508px;top:3px">-</div><div class="t" style="left:1608px;top:3px">-</div></div>
<div style="left:266px;top:631px;width:1636px;height:22px;background:#f2f5f7;overflow:hidden"><svg style="left:10px;top:5px" width="12" height="12"><path d="M4.5 0.5h3v4h4v3h-4v4h-3v-4h-4v-3h4z" fill="#a6e884" stroke="#2a9418" stroke-width="1"/><path d="M6 2v8M2 6h8" stroke="#d6f8c2" stroke-width="0.8"/></svg><div class="t" style="left:64px;top:3px">{专业律师为您服务}_咨询不收费_专业律师团队为您服务！</div><div class="t" style="left:528px;top:3px">{专业律师为您...</div><div class="t" style="left:628px;top:3px">{专业律师为您...</div><div class="t" style="left:729px;top:3px">-</div><div class="t" style="left:879px;top:3px">-</div><div class="t" style="left:1029px;top:3px">本地新增</div><div class="t" style="left:1118px;top:3px">启用</div><div class="t" style="left:1208px;top:3px">律师-保险理赔</div><div class="t" style="left:1308px;top:3px">律师-城市词</div><div class="t" style="left:1408px;top:3px">-</div><div class="t" style="left:1508px;top:3px">-</div><div class="t" style="left:1608px;top:3px">-</div></div>
<div style="left:266px;top:653px;width:1636px;height:22px;background:#fff;overflow:hidden"><svg style="left:10px;top:5px" width="12" height="12"><path d="M4.5 0.5h3v4h4v3h-4v4h-3v-4h-4v-3h4z" fill="#a6e884" stroke="#2a9418" stroke-width="1"/><path d="M6 2v8M2 6h8" stroke="#d6f8c2" stroke-width="0.8"/></svg><div class="t" style="left:64px;top:3px">{专业律师为您服务}_咨询不收费_专业{专业律师为您服务}</div><div class="t" style="left:528px;top:3px">{专业律师为您...</div><div class="t" style="left:628px;top:3px">{专业律师为您...</div><div class="t" style="left:729px;top:3px">-</div><div class="t" style="left:879px;top:3px">-</div><div class="t" style="left:1029px;top:3px">本地新增</div><div class="t" style="left:1118px;top:3px">启用</div><div class="t" style="left:1208px;top:3px">律师-保险理赔</div><div class="t" style="left:1308px;top:3px">律师-城市词</div><div class="t" style="left:1408px;top:3px">-</div><div class="t" style="left:1508px;top:3px">-</div><div class="t" style="left:1608px;top:3px">-</div></div>
<div style="left:266px;top:675px;width:1636px;height:22px;background:#f2f5f7;overflow:hidden"><svg style="left:10px;top:5px" width="12" height="12"><path d="M4.5 0.5h3v4h4v3h-4v4h-3v-4h-4v-3h4z" fill="#a6e884" stroke="#2a9418" stroke-width="1"/><path d="M6 2v8M2 6h8" stroke="#d6f8c2" stroke-width="0.8"/></svg><div class="t" style="left:64px;top:3px">{专业律师为您服务}_咨询不收费_满以后再委托</div><div class="t" style="left:528px;top:3px">{专业律师为您...</div><div class="t" style="left:628px;top:3px">{专业律师为您...</div><div class="t" style="left:729px;top:3px">-</div><div class="t" style="left:879px;top:3px">-</div><div class="t" style="left:1029px;top:3px">本地新增</div><div class="t" style="left:1118px;top:3px">启用</div><div class="t" style="left:1208px;top:3px">律师-保险理赔</div><div class="t" style="left:1308px;top:3px">律师-城市词</div><div class="t" style="left:1408px;top:3px">-</div><div class="t" style="left:1508px;top:3px">-</div><div class="t" style="left:1608px;top:3px">-</div></div>
<div style="left:266px;top:697px;width:1636px;height:22px;background:#fff;overflow:hidden"><svg style="left:10px;top:5px" width="12" height="12"><path d="M4.5 0.5h3v4h4v3h-4v4h-3v-4h-4v-3h4z" fill="#a6e884" stroke="#2a9418" stroke-width="1"/><path d="M6 2v8M2 6h8" stroke="#d6f8c2" stroke-width="0.8"/></svg><div class="t" style="left:64px;top:3px">{专业律师为您服务}_咨询不收费_快速解决您的法律难题</div><div class="t" style="left:528px;top:3px">{专业律师为您...</div><div class="t" style="left:628px;top:3px">{专业律师为您...</div><div class="t" style="left:729px;top:3px">-</div><div class="t" style="left:879px;top:3px">-</div><div class="t" style="left:1029px;top:3px">本地新增</div><div class="t" style="left:1118px;top:3px">启用</div><div class="t" style="left:1208px;top:3px">律师-保险理赔</div><div class="t" style="left:1308px;top:3px">律师-城市词</div><div class="t" style="left:1408px;top:3px">-</div><div class="t" style="left:1508px;top:3px">-</div><div class="t" style="left:1608px;top:3px">-</div></div>
<div style="left:266px;top:719px;width:1636px;height:22px;background:#f2f5f7;overflow:hidden"><svg style="left:10px;top:5px" width="12" height="12"><path d="M4.5 0.5h3v4h4v3h-4v4h-3v-4h-4v-3h4z" fill="#a6e884" stroke="#2a9418" stroke-width="1"/><path d="M6 2v8M2 6h8" stroke="#d6f8c2" stroke-width="0.8"/></svg><div class="t" style="left:64px;top:3px">{专业律师为您服务}_咨询不收费_快速解决您的法律难题</div><div class="t" style="left:528px;top:3px">{专业律师为您...</div><div class="t" style="left:628px;top:3px">{专业律师为您...</div><div class="t" style="left:729px;top:3px">-</div><div class="t" style="left:879px;top:3px">-</div><div class="t" style="left:1029px;top:3px">本地新增</div><div class="t" style="left:1118px;top:3px">启用</div><div class="t" style="left:1208px;top:3px">律师-保险理赔</div><div class="t" style="left:1308px;top:3px">律师</div><div class="t" style="left:1408px;top:3px">-</div><div class="t" style="left:1508px;top:3px">-</div><div class="t" style="left:1608px;top:3px">-</div></div>
<div style="left:266px;top:741px;width:1636px;height:22px;background:#fff;overflow:hidden"><svg style="left:10px;top:5px" width="12" height="12"><path d="M4.5 0.5h3v4h4v3h-4v4h-3v-4h-4v-3h4z" fill="#a6e884" stroke="#2a9418" stroke-width="1"/><path d="M6 2v8M2 6h8" stroke="#d6f8c2" stroke-width="0.8"/></svg><div class="t" style="left:64px;top:3px">{专业律师为您服务}_咨询不收费_满以后再委托</div><div class="t" style="left:528px;top:3px">{专业律师为您...</div><div class="t" style="left:628px;top:3px">{专业律师为您...</div><div class="t" style="left:729px;top:3px">-</div><div class="t" style="left:879px;top:3px">-</div><div class="t" style="left:1029px;top:3px">本地新增</div><div class="t" style="left:1118px;top:3px">启用</div><div class="t" style="left:1208px;top:3px">律师-保险理赔</div><div class="t" style="left:1308px;top:3px">律师</div><div class="t" style="left:1408px;top:3px">-</div><div class="t" style="left:1508px;top:3px">-</div><div class="t" style="left:1608px;top:3px">-</div></div>
<div style="left:266px;top:763px;width:1636px;height:22px;background:#f2f5f7;overflow:hidden"><svg style="left:10px;top:5px" width="12" height="12"><path d="M4.5 0.5h3v4h4v3h-4v4h-3v-4h-4v-3h4z" fill="#a6e884" stroke="#2a9418" stroke-width="1"/><path d="M6 2v8M2 6h8" stroke="#d6f8c2" stroke-width="0.8"/></svg><div class="t" style="left:64px;top:3px">{专业律师为您服务}_咨询不收费_专业{专业律师为您服务}</div><div class="t" style="left:528px;top:3px">{专业律师为您...</div><div class="t" style="left:628px;top:3px">{专业律师为您...</div><div class="t" style="left:729px;top:3px">-</div><div class="t" style="left:879px;top:3px">-</div><div class="t" style="left:1029px;top:3px">本地新增</div><div class="t" style="left:1118px;top:3px">启用</div><div class="t" style="left:1208px;top:3px">律师-保险理赔</div><div class="t" style="left:1308px;top:3px">律师</div><div class="t" style="left:1408px;top:3px">-</div><div class="t" style="left:1508px;top:3px">-</div><div class="t" style="left:1608px;top:3px">-</div></div>
<div style="left:266px;top:785px;width:1636px;height:8px;background:#fff;overflow:hidden"><svg style="left:10px;top:5px" width="12" height="12"><path d="M4.5 0.5h3v4h4v3h-4v4h-3v-4h-4v-3h4z" fill="#a6e884" stroke="#2a9418" stroke-width="1"/><path d="M6 2v8M2 6h8" stroke="#d6f8c2" stroke-width="0.8"/></svg><div class="t" style="left:64px;top:3px">{专业律师为您服务}_咨询不收费_专业律师团队为您服务！</div><div class="t" style="left:528px;top:3px">{专业律师为您...</div><div class="t" style="left:628px;top:3px">{专业律师为您...</div><div class="t" style="left:729px;top:3px">-</div><div class="t" style="left:879px;top:3px">-</div><div class="t" style="left:1029px;top:3px">本地新增</div><div class="t" style="left:1118px;top:3px">启用</div><div class="t" style="left:1208px;top:3px">律师-保险理赔</div><div class="t" style="left:1308px;top:3px">律师</div><div class="t" style="left:1408px;top:3px">-</div><div class="t" style="left:1508px;top:3px">-</div><div class="t" style="left:1608px;top:3px">-</div></div>
<div style="left:266px;top:807px;width:1636px;height:-14px;background:#f2f5f7;overflow:hidden"><svg style="left:10px;top:5px" width="12" height="12"><path d="M4.5 0.5h3v4h4v3h-4v4h-3v-4h-4v-3h4z" fill="#a6e884" stroke="#2a9418" stroke-width="1"/><path d="M6 2v8M2 6h8" stroke="#d6f8c2" stroke-width="0.8"/></svg><div class="t" style="left:64px;top:3px">{专业律师为您服务}_咨询不收费_专业律师团队为您服务！</div><div class="t" style="left:528px;top:3px">{专业律师为您...</div><div class="t" style="left:628px;top:3px">{专业律师为您...</div><div class="t" style="left:729px;top:3px">-</div><div class="t" style="left:879px;top:3px">-</div><div class="t" style="left:1029px;top:3px">本地新增</div><div class="t" style="left:1118px;top:3px">启用</div><div class="t" style="left:1208px;top:3px">律师-保险理赔</div><div class="t" style="left:1308px;top:3px">律师</div><div class="t" style="left:1408px;top:3px">-</div><div class="t" style="left:1508px;top:3px">-</div><div class="t" style="left:1608px;top:3px">-</div></div>
<svg style="left:609px;top:260px" width="16" height="16"><path d="M9.5 1H1v14h14V6" fill="none" stroke="#8f94a0" stroke-width="1.8"/><path d="M4.5 11.5L14.5 1" stroke="#8f94a0" stroke-width="2"/></svg>
<svg style="left:872px;top:260px" width="16" height="16"><path d="M9.5 1H1v14h14V6" fill="none" stroke="#8f94a0" stroke-width="1.8"/><path d="M4.5 11.5L14.5 1" stroke="#8f94a0" stroke-width="2"/></svg>
<svg style="left:972px;top:260px" width="16" height="16"><path d="M9.5 1H1v14h14V6" fill="none" stroke="#8f94a0" stroke-width="1.8"/><path d="M4.5 11.5L14.5 1" stroke="#8f94a0" stroke-width="2"/></svg>
<svg style="left:1007px;top:260px" width="16" height="16"><path d="M9.5 1H1v14h14V6" fill="none" stroke="#8f94a0" stroke-width="1.8"/><path d="M4.5 11.5L14.5 1" stroke="#8f94a0" stroke-width="2"/></svg>
<svg style="left:1157px;top:260px" width="16" height="16"><path d="M9.5 1H1v14h14V6" fill="none" stroke="#8f94a0" stroke-width="1.8"/><path d="M4.5 11.5L14.5 1" stroke="#8f94a0" stroke-width="2"/></svg>
<svg style="left:1416px;top:260px" width="16" height="16"><path d="M9.5 1H1v14h14V6" fill="none" stroke="#8f94a0" stroke-width="1.8"/><path d="M4.5 11.5L14.5 1" stroke="#8f94a0" stroke-width="2"/></svg>
<div style="left:266px;top:793px;width:1635px;height:16px;background:#ececec;border-top:1px solid #d5d5d5"></div>
<svg style="left:271px;top:797px" width="5" height="8"><path d="M5 0v8L0 4z" fill="#333"/></svg>
<div style="left:285px;top:793px;width:1504px;height:15px;background:linear-gradient(#fafafa,#e6e6e6 50%,#cfcfcf);border:1px solid #979797;border-radius:2px"></div>
<svg style="left:1033px;top:797px" width="8" height="7"><path d="M1 0v7M4 0v7M7 0v7" stroke="#333" stroke-width="1.3"/></svg>
<svg style="left:1891px;top:797px" width="5" height="8"><path d="M0 0v8L5 4z" fill="#333"/></svg>
<div style="left:1902px;top:268px;width:17px;height:541px;background:#ececec"></div>
<svg style="left:1907px;top:274px" width="7" height="4"><path d="M0 4h7L3.5 0z" fill="#444"/></svg>
<div style="left:1904px;top:287px;width:14px;height:27px;background:linear-gradient(90deg,#f7f7f7,#dcdcdc);border:1px solid #9a9a9a;border-radius:2px"></div>
<svg style="left:1907px;top:296px" width="7" height="8"><path d="M0 1h7M0 4h7M0 7h7" stroke="#555" stroke-width="1.2"/></svg>
<svg style="left:1907px;top:796px" width="8" height="5"><path d="M0 0h8L4 5z" fill="#333"/></svg><div style="left:266px;top:810px;width:1653px;height:1px;background:#5d7088"></div>
<div style="left:266px;top:811px;width:1653px;height:11px;background:linear-gradient(#e6eaef,#d9dfe6)"></div>
<div style="left:1073px;top:811px;width:40px;height:9px;background:#5f7b9b"></div>
<svg style="left:1089px;top:813px" width="8" height="5"><path d="M0 0h8L4 5z" fill="#fff"/></svg>
<div style="left:266px;top:822px;width:1653px;height:217px;background:#fff"></div>
<div style="left:341px;top:827px;width:145px;height:22px;background:#cfe4f9"></div>
<div style="left:270px;top:826px;width:72px;height:23px;background:#fff;border:1px solid #a9c8ec;border-bottom:none"></div>
<div style="left:270px;top:848px;width:1646px;height:189px;border:1px solid #a9c8ec;border-top:none"></div>
<div style="left:342px;top:848px;width:1574px;height:1px;background:#a9c8ec"></div>
<div class="t" style="left:281px;top:829px;color:#1f3f8f">基础设置</div>
<div class="t" style="left:352px;top:830px;color:#1f3f8f">创意配图</div>
<div class="t" style="left:424px;top:830px;color:#1f3f8f">创意预览</div>
<div class="t" style="left:283px;top:864px;color:#777">生成方式：</div>
<div style="left:378px;top:859px;width:236px;height:25px;background:linear-gradient(#f7f7f7,#dedede);border:1px solid #6f6f6f;border-radius:3px"></div>
<div class="t" style="left:382px;top:863px;color:#111">自定义创意</div>
<svg style="left:601px;top:869px" width="8" height="5"><path d="M0 0h8L4 5z" fill="#111"/></svg>
<div class="t" style="left:283px;top:895px;color:#777">创意标题：</div>
<div style="left:380px;top:893px;width:1186px;height:23px;background:#fff;border:1px solid #d2d2d2;border-top-color:#bdbdbd"></div>
<div class="t" style="left:383px;top:896px;color:#111">{专业律师为您服务}_1对1法律服务_专业律师事务所</div>
<div style="left:1572px;top:893px;width:31px;height:23px;background:#cfe5f9;border:1px solid #9fbcd8"></div>
<div class="t" style="left:1572px;top:896px;width:31px;text-align:center;color:#111">{词}</div>
<div style="left:1609px;top:893px;width:34px;height:23px;background:#cfe5f9;border:1px solid #9fbcd8"></div>
<div class="t" style="left:1609px;top:896px;width:34px;text-align:center;color:#111">{地}</div>
<div class="t" style="left:1654px;top:895px;color:#666">44/50</div>
<div class="t" style="left:283px;top:924px;color:#777">创意描述1：</div>
<div style="left:380px;top:922px;width:1186px;height:23px;background:#fff;border:1px solid #d2d2d2;border-top-color:#bdbdbd"></div>
<div class="t" style="left:383px;top:925px;color:#111">{专业律师为您服务},办案经验丰富,资深律师1对1分析案情,大量胜诉案例,</div>
<div style="left:1572px;top:922px;width:31px;height:23px;background:#cfe5f9;border:1px solid #9fbcd8"></div>
<div class="t" style="left:1572px;top:925px;width:31px;text-align:center;color:#111">{词}</div>
<div class="t" style="left:1654px;top:924px;color:#666">64/80</div>
<div class="t" style="left:283px;top:953px;color:#777">创意描述2：</div>
<div style="left:380px;top:951px;width:1186px;height:23px;background:#fff;border:1px solid #d2d2d2;border-top-color:#bdbdbd"></div>
<div class="t" style="left:383px;top:954px;color:#111">{专业律师为您服务}坚决维护您的合法权益,高效解决您的法律问题...</div>
<div style="left:1572px;top:951px;width:31px;height:23px;background:#cfe5f9;border:1px solid #9fbcd8"></div>
<div class="t" style="left:1572px;top:954px;width:31px;text-align:center;color:#111">{词}</div>
<div class="t" style="left:1654px;top:953px;color:#666">60/80</div>
<div class="t" style="left:1717px;top:864px;color:#777">状态：</div>
<div class="t" style="left:1791px;top:860px;font-weight:bold;color:#000;font-size:12.5px">本地新增</div>
<div class="t" style="left:1717px;top:920px;color:#777">启用/暂停：</div>
<div style="left:1788px;top:916px;width:96px;height:25px;background:linear-gradient(#f7f7f7,#dedede);border:1px solid #6f6f6f;border-radius:3px"></div>
<div class="t" style="left:1792px;top:921px;color:#111">启用</div>
<svg style="left:1871px;top:927px" width="8" height="5"><path d="M0 0h8L4 5z" fill="#111"/></svg>
<div class="t" style="left:1717px;top:976px;color:#777">标签：</div>
<div class="t" style="left:1790px;top:976px;color:#111">未设置</div>
<svg style="left:1851px;top:977px" width="12" height="12"><rect x="0.6" y="0.6" width="10.8" height="10.8" rx="4" fill="#fff27a" stroke="#2f64d8" stroke-width="1.2"/><text x="6" y="9.5" font-size="9" font-family="Liberation Sans" fill="#2a5ad0" text-anchor="middle">?</text></svg>
<div style="left:1899px;top:849px;width:16px;height:187px;background:#efefef"></div>
<svg style="left:1903px;top:856px" width="8" height="5"><path d="M0 5h8L4 0z" fill="#333"/></svg>
<div style="left:1900px;top:867px;width:14px;height:101px;background:linear-gradient(90deg,#f7f7f7,#d6d6d6);border:1px solid #a0a0a0;border-radius:2px"></div>
<svg style="left:1903px;top:913px" width="7" height="8"><path d="M0 1h7M0 4h7M0 7h7" stroke="#555" stroke-width="1.2"/></svg>
<div style="left:1748px;top:1011px;width:171px;height:28px;background:#f7f8fa;border:1px solid #b9c2cf;border-right:none;border-bottom:none"></div>
<svg style="left:1752px;top:1014px" width="23" height="23"><circle cx="11.5" cy="11.5" r="10" fill="none" stroke="#3f7ff0" stroke-width="2.2"/><text x="11.5" y="14.5" font-size="7.5" font-weight="bold" font-family="Liberation Sans" fill="#3f7ff0" text-anchor="middle">iFLY</text></svg>
<svg style="left:1787px;top:1016px" width="16" height="18"><rect x="1.5" y="4.5" width="13" height="8" fill="none" stroke="#3f7ff0" stroke-width="2.6"/><path d="M8 0v18" stroke="#3f7ff0" stroke-width="2.8"/></svg>
<svg style="left:1816px;top:1018px" width="13" height="13"><circle cx="3" cy="3" r="2.2" fill="none" stroke="#3f7ff0" stroke-width="1.4"/><circle cx="9.5" cy="8.5" r="2.5" fill="#3f7ff0"/><path d="M11.5 9c0 2-1 3-2.5 4" stroke="#3f7ff0" stroke-width="1.5" fill="none"/></svg>
<svg style="left:1843px;top:1017px" width="13" height="17"><rect x="3.5" y="0" width="6" height="11" rx="3" fill="#3f7ff0"/><path d="M1 7a5.5 5.5 0 0 0 11 0M6.5 13v4" fill="none" stroke="#3f7ff0" stroke-width="1.8"/></svg>
<svg style="left:1870px;top:1017px" width="14" height="16"><circle cx="7" cy="4" r="3.8" fill="#3f7ff0"/><path d="M0 16c0-5 3-7 7-7s7 2 7 7z" fill="#3f7ff0"/></svg>
<svg style="left:1895px;top:1017px" width="16" height="16"><rect x="0" y="1" width="6.5" height="6.5" fill="#3f7ff0"/><rect x="0" y="9" width="6.5" height="6.5" fill="#3f7ff0"/><rect x="8.5" y="9" width="6.5" height="6.5" fill="#3f7ff0"/><path d="M11.8 0l3.6 3.8-3.6 3.8-3.6-3.8z" fill="#3f7ff0"/></svg>
</body></html>
